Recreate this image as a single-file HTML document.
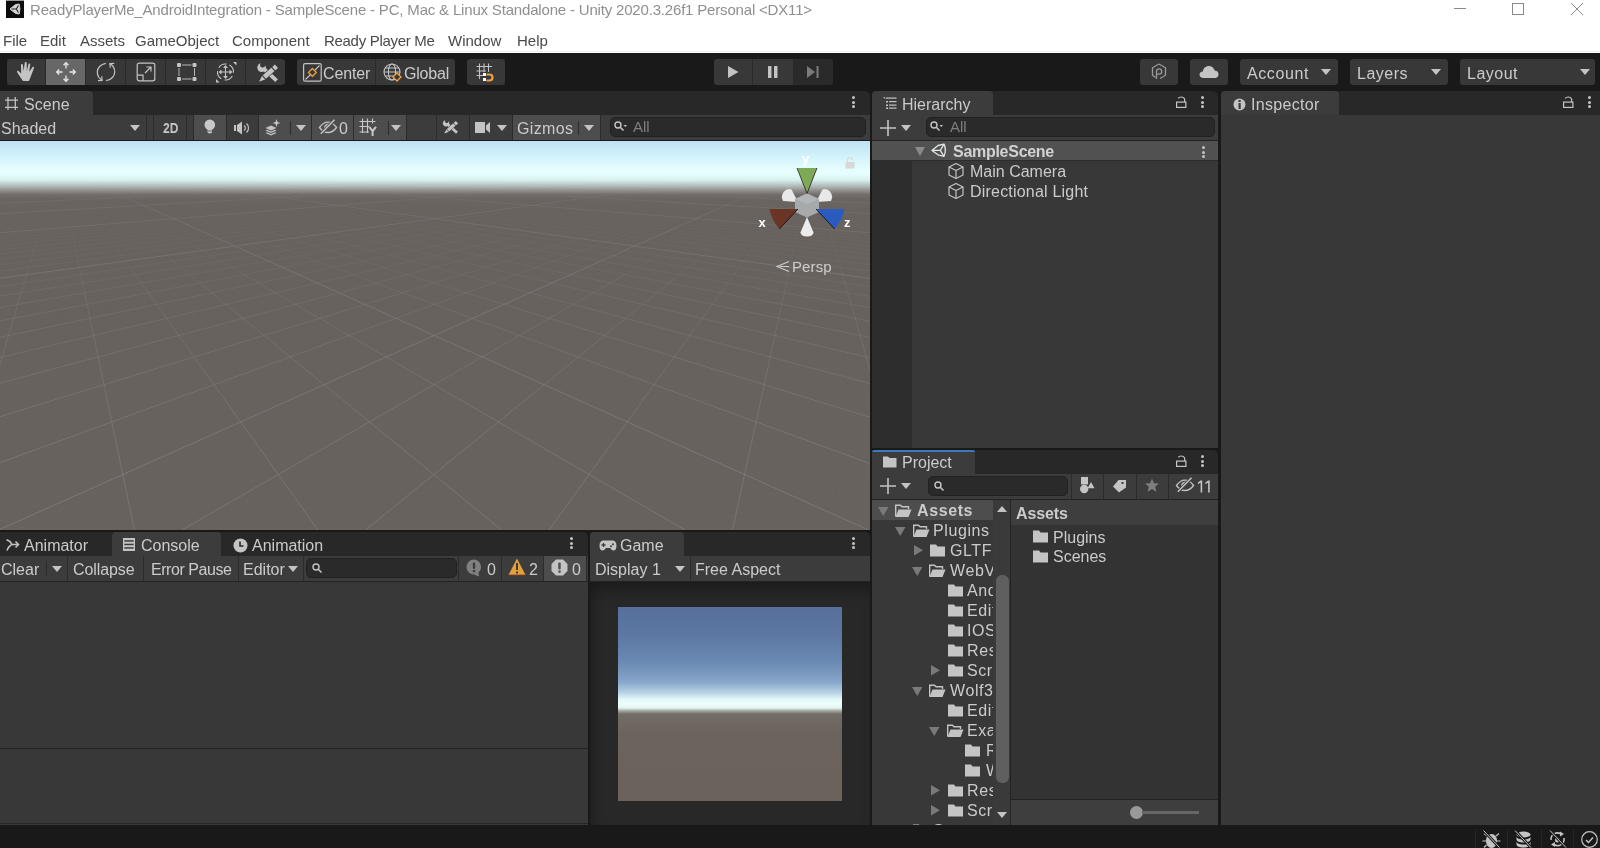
<!DOCTYPE html>
<html><head><meta charset="utf-8">
<style>
html,body{margin:0;padding:0;width:1600px;height:848px;overflow:hidden;background:#191919;}
body{position:relative;font-family:"Liberation Sans",sans-serif;color:#c4c4c4;}
.a{position:absolute;}
.t{position:absolute;white-space:nowrap;will-change:transform;font-size:16px;line-height:16px;color:#cbcbcb;margin-top:1.5px;}
.b{position:absolute;background:#383838;}
svg{position:absolute;overflow:visible;}
.tabbar{position:absolute;background:#282828;border-radius:5px 5px 0 0;}
.tab{position:absolute;background:#3c3c3c;border-radius:4px 4px 0 0;}
.tb{position:absolute;background:#3c3c3c;}
.srch{position:absolute;background:#2a2a2a;border:1px solid #212121;border-radius:5px;box-sizing:border-box;}
.sep{position:absolute;background:#2b2b2b;width:1px;}
.arr{position:absolute;width:0;height:0;border-left:5px solid transparent;border-right:5px solid transparent;border-top:6px solid #c4c4c4;}
.keb{position:absolute;width:3px;height:12px;}
.keb i{position:absolute;left:0;width:3px;height:3px;border-radius:2px;background:#c4c4c4;}
</style></head><body>
<!-- title + menu -->
<div class="a" style="left:0;top:0;width:1600px;height:53px;background:#ffffff"></div>
<div class="a" style="left:0;top:51px;width:1600px;height:1px;background:#eef0f0"></div>
<div class="a" style="left:6px;top:0;width:18px;height:18px;background:#0c0c0c;border-top:1px solid #9a9a9a;box-sizing:border-box"></div><svg style="left:6px;top:0" width="18" height="18" viewBox="0 0 18 18"><path d="M4 9 L9.5 4.6 L13.2 4 Q14.6 9 13.2 14 L9.5 13.4Z" fill="#d2d4d4" stroke="#d2d4d4" stroke-width="1" stroke-linejoin="round"/><path d="M5.5 9H10.3L12.5 5.5M10.3 9L12.5 12.5" stroke="#222" stroke-width="1.1" fill="none"/></svg>
<div class="t" style="margin-top:0;left:30px;top:2px;font-size:15px;line-height:15px;color:#8f8f8f;letter-spacing:-0.18px">ReadyPlayerMe_AndroidIntegration - SampleScene - PC, Mac &amp; Linux Standalone - Unity 2020.3.26f1 Personal &lt;DX11&gt;</div>
<svg style="left:1454px;top:8px" width="13" height="2"><rect x="0" y="0" width="12" height="1" fill="#8a8a8a"/></svg>
<svg style="left:1512px;top:3px" width="13" height="13"><rect x="0.5" y="0.5" width="11" height="11" fill="none" stroke="#8a8a8a" stroke-width="1"/></svg>
<svg style="left:1571px;top:3px" width="13" height="13"><path d="M0 0L12 12M12 0L0 12" stroke="#8a8a8a" stroke-width="1"/></svg>
<div class="t" style="margin-top:0;top:33px;font-size:15px;line-height:15px;color:#4a4a4a">
<span class="a" style="left:3px">File</span><span class="a" style="left:40px">Edit</span><span class="a" style="left:80px">Assets</span><span class="a" style="left:135px">GameObject</span><span class="a" style="left:232px">Component</span><span class="a" style="left:324px;letter-spacing:-0.3px">Ready Player Me</span><span class="a" style="left:448px">Window</span><span class="a" style="left:517px">Help</span>
</div>

<!-- main toolbar buttons -->
<div class="a" style="left:7px;top:59px;width:278px;height:26px;background:#383838;border-radius:3px"></div>
<div class="a" style="left:46px;top:59px;width:39px;height:26px;background:#676767"></div>
<div class="a" style="left:45px;top:59px;width:1px;height:26px;background:#2a2a2a"></div>
<div class="a" style="left:85px;top:59px;width:1px;height:26px;background:#2a2a2a"></div>
<div class="a" style="left:125px;top:59px;width:1px;height:26px;background:#2a2a2a"></div>
<div class="a" style="left:165px;top:59px;width:1px;height:26px;background:#2a2a2a"></div>
<div class="a" style="left:205px;top:59px;width:1px;height:26px;background:#2a2a2a"></div>
<div class="a" style="left:245px;top:59px;width:1px;height:26px;background:#2a2a2a"></div>
<!-- hand -->
<svg style="left:16px;top:61px" width="20" height="21" viewBox="0 0 20 21"><path d="M7 20 C5.5 18 3.5 15 1.2 11.2 C0.6 10.2 1.6 9.4 2.5 10 L5.2 12.5 L5 3.8 C5 2.6 6.8 2.6 6.9 3.8 L7.6 10 L8.8 1.8 C8.9 0.7 10.7 0.7 10.7 1.9 L10.8 10 L12.5 3 C12.7 2 14.4 2.3 14.2 3.4 L13.2 10.8 L16.4 6.2 C17 5.3 18.4 6 18 7 C16.5 10.5 15.5 14 14 17.5 C13.5 18.8 13.2 19.5 13 20 Z" fill="#c4c4c4"/></svg>
<!-- move -->
<svg style="left:56px;top:62px" width="20" height="20" viewBox="0 0 20 20"><g stroke="#e4eaec" stroke-width="1.35" fill="none"><path d="M10 0.8V6.5M10 13.5V19.2M0.8 10H6.5M13.5 10H19.2"/><path d="M7.6 3.2L10 0.8L12.4 3.2M7.6 16.8L10 19.2L12.4 16.8M3.2 7.6L0.8 10L3.2 12.4M16.8 7.6L19.2 10L16.8 12.4"/></g></svg>
<!-- rotate -->
<svg style="left:96px;top:62px" width="20" height="20" viewBox="0 0 20 20"><g stroke="#c4c4c4" stroke-width="1.2" fill="none"><path d="M9.8 1.4C4.5 2.2 1.3 6 1.3 10C1.3 13.6 3.2 16.6 6 18.2"/><path d="M5.7 14.2L6.1 18.4L2 18.7"/><path d="M10.2 18.6C15.5 17.8 18.7 14 18.7 10C18.7 6.4 16.8 3.4 14 1.8"/><path d="M18.2 1.3L13.9 1.6L14.3 5.8"/></g></svg>
<!-- scale -->
<svg style="left:136px;top:62px" width="20" height="20" viewBox="0 0 20 20"><g stroke="#c4c4c4" stroke-width="1.2" fill="none"><rect x="1.2" y="1.2" width="17.6" height="17.6" rx="2"/><path d="M1.2 13.2H7V18.8"/><path d="M9 11L15 5M10.5 5H15V9.5"/></g></svg>
<!-- rect -->
<svg style="left:176px;top:62px" width="21" height="20" viewBox="0 0 21 20"><g fill="#c4c4c4"><rect x="1" y="1" width="4" height="4" rx="1"/><rect x="16.5" y="1" width="4" height="4" rx="1"/><rect x="1" y="15" width="4" height="4" rx="1"/><rect x="16.5" y="15" width="4" height="4" rx="1"/></g><g stroke="#c4c4c4" stroke-width="0.9"><path d="M6 3H15.5M6 17H15.5M3 6V14M18.5 6V14"/></g></svg>
<!-- transform -->
<svg style="left:216px;top:62px" width="21" height="21" viewBox="0 0 21 21"><g stroke="#c4c4c4" stroke-width="1.1" fill="none"><circle cx="9.5" cy="10" r="8" stroke-dasharray="9 3.6" transform="rotate(-60 9.5 10)"/><path d="M9.5 4.5V15.5M4 10H15"/></g><g fill="#c4c4c4"><path d="M9.5 3L12 6H7Z"/><path d="M9.5 17L12 14H7Z"/><path d="M2.5 10L5.5 7.5V12.5Z"/><path d="M16.5 10L13.5 7.5V12.5Z"/><path d="M20.5 0L20.5 3.5L17 0Z"/><path d="M0 20.5L0 17L3.5 20.5Z"/></g></svg>
<!-- tools -->
<svg style="left:252px;top:59px" width="30" height="26" viewBox="0 0 30 26"><g fill="#c4c4c4"><circle cx="9.6" cy="8.6" r="4.3"/><path d="M11.22 11.90L13.78 9.10L25.88 20.20L23.32 23.00Z"/></g><circle cx="10.6" cy="5.9" r="2.5" fill="#383838"/><path d="M22.98 5.48L26.02 8.92L13.07 20.39L7.00 22.70L10.02 16.95Z" fill="#c4c4c4" stroke="#383838" stroke-width="1.3" paint-order="stroke"/><path d="M19.42 7.96L23.14 12.15M10.07 16.24L13.78 20.44" stroke="#383838" stroke-width="1.1"/></svg>
<!-- center / global -->
<div class="a" style="left:297px;top:59px;width:158px;height:26px;background:#383838;border-radius:3px"></div>
<div class="a" style="left:375px;top:59px;width:1px;height:26px;background:#2a2a2a"></div>
<svg style="left:303px;top:63px" width="19" height="19" viewBox="0 0 19 19"><rect x="0.6" y="0.6" width="17.6" height="17.6" rx="1.5" fill="none" stroke="#c4c4c4" stroke-width="1.2"/><path d="M2.5 16.5L16.5 2.5" stroke="#c4c4c4" stroke-width="1.1"/><path d="M9.4 5.5L13.3 9.4L9.4 13.3L5.5 9.4Z" fill="#383838" stroke="#f0a040" stroke-width="1.3"/></svg>
<div class="t" style="left:323px;top:64px;letter-spacing:-0.15px">Center</div>
<svg style="left:383px;top:63px" width="20" height="20" viewBox="0 0 20 20"><g stroke="#c4c4c4" stroke-width="1.1" fill="none"><circle cx="9" cy="9" r="8"/><ellipse cx="9" cy="9" rx="3.6" ry="8"/><path d="M1 9H17M2.2 5H15.8M2.2 13H15.8"/></g><path d="M14 10L18 14L14 18L10 14Z" fill="#383838" stroke="#f0a040" stroke-width="1.3"/></svg>
<div class="t" style="left:404px;top:64px;letter-spacing:-0.2px">Global</div>
<!-- snap -->
<div class="a" style="left:467px;top:59px;width:38px;height:26px;background:#383838;border-radius:3px"></div>
<svg style="left:476px;top:63px" width="20" height="20" viewBox="0 0 20 20"><g stroke="#c4c4c4" stroke-width="1.1"><path d="M3.5 0.5V16M8 0.5V9M12.5 0.5V9M0.5 3.5H16M0.5 8H10M0.5 12.5H7"/></g><rect x="7" y="10" width="3" height="3" fill="#fff"/><rect x="7" y="15" width="3" height="3" fill="#fff"/><path d="M10.5 11.5H13.5A3 3 0 0 1 13.5 17.5H10.5" fill="none" stroke="#f0a040" stroke-width="2.2"/></svg>

<!-- play -->
<div class="a" style="left:714px;top:59px;width:118px;height:26px;background:#383838;border-radius:3px"></div>
<div class="a" style="left:793px;top:59px;width:40px;height:26px;background:#2a2a2a;border-radius:0 3px 3px 0"></div>
<div class="a" style="left:752px;top:59px;width:1px;height:26px;background:#2a2a2a"></div>
<svg style="left:728px;top:66px" width="12" height="13"><path d="M0 0L10.5 6L0 12Z" fill="#c4c4c4"/></svg>
<svg style="left:768px;top:66px" width="12" height="13"><rect x="0" y="0" width="3.5" height="12" rx="0.6" fill="#c4c4c4"/><rect x="6" y="0" width="3.5" height="12" rx="0.6" fill="#c4c4c4"/></svg>
<svg style="left:807px;top:66px" width="14" height="13"><path d="M0 0L8 6L0 12Z" fill="#7a7a7a"/><rect x="9.5" y="0" width="2" height="12" fill="#7a7a7a"/></svg>

<!-- right toolbar -->
<div class="a" style="left:1140px;top:59px;width:38px;height:26px;background:#383838;border-radius:3px"></div>
<svg style="left:1150px;top:63px" width="18" height="18" viewBox="0 0 18 18"><g stroke="#9a9a9a" stroke-width="1.3" fill="none"><path d="M9 1L15.5 4.8V12.2L10 15.5M5.5 14.5L2.5 12.2V4.8L9 1"/><path d="M6.5 16V8.5A2.6 2.6 0 1 1 9.2 11.1H7"/></g></svg>
<div class="a" style="left:1190px;top:59px;width:38px;height:26px;background:#383838;border-radius:3px"></div>
<svg style="left:1199px;top:65px" width="20" height="14" viewBox="0 0 20 14"><path d="M4 13C1.5 13 0.5 11.2 0.5 9.6C0.5 7.8 2 6.4 3.8 6.5C4.3 3.3 6.8 1 9.8 1C12.8 1 15 3 15.6 5.6C17.8 5.6 19.5 7.3 19.5 9.4C19.5 11.4 18 13 16 13Z" fill="#c4c4c4"/></svg>
<div class="a" style="left:1240px;top:59px;width:98px;height:26px;background:#383838;border-radius:3px"></div>
<div class="t" style="left:1247px;top:64px;letter-spacing:0.6px">Account</div>
<div class="arr" style="left:1321px;top:69px"></div>
<div class="a" style="left:1350px;top:59px;width:98px;height:26px;background:#383838;border-radius:3px"></div>
<div class="t" style="left:1357px;top:64px;letter-spacing:0.5px">Layers</div>
<div class="arr" style="left:1431px;top:69px"></div>
<div class="a" style="left:1460px;top:59px;width:135px;height:26px;background:#383838;border-radius:3px"></div>
<div class="t" style="left:1467px;top:64px;letter-spacing:0.5px">Layout</div>
<div class="arr" style="left:1580px;top:69px"></div>
<!-- SCENE PANEL -->
<div class="tabbar" style="left:0;top:91px;width:870px;height:24px;border-radius:0 5px 0 0"></div>
<div class="tab" style="left:0;top:91px;width:93px;height:24px;border-radius:0 4px 0 0"></div>
<svg style="left:5px;top:97px" width="13" height="13" viewBox="0 0 13 13"><g stroke="#c4c4c4" stroke-width="1.25"><path d="M3 0V13M10.3 0V13M0 3H13M0 10.3H13"/></g></svg>
<div class="t" style="left:24px;top:95px;letter-spacing:0.1px">Scene</div>
<div class="keb" style="left:852px;top:96px"><i style="top:0"></i><i style="top:4.5px"></i><i style="top:9px"></i></div>

<div class="tb" style="left:0;top:115px;width:870px;height:25px"></div>
<div class="a" style="left:0;top:140px;width:870px;height:1px;background:#191919"></div>
<div class="t" style="left:1px;top:119px">Shaded</div>
<div class="arr" style="left:130px;top:125px"></div>
<div class="a" style="left:146px;top:115px;width:1px;height:25px;background:#2b2b2b"></div>
<div class="a" style="left:153px;top:115px;width:1px;height:25px;background:#2b2b2b"></div>
<div class="t" style="left:162.5px;top:119px;font-size:14px;line-height:14px;font-weight:bold;transform:scaleX(0.86);transform-origin:0 0;color:#c8c8c8">2D</div>
<div class="a" style="left:186px;top:115px;width:1px;height:25px;background:#2b2b2b"></div>
<div class="a" style="left:193px;top:115px;width:1px;height:25px;background:#2b2b2b"></div>
<div class="a" style="left:194px;top:115px;width:32px;height:25px;background:#4d4d4d"></div>
<div class="a" style="left:226px;top:115px;width:1px;height:25px;background:#2b2b2b"></div>
<div class="a" style="left:258px;top:115px;width:1px;height:25px;background:#2b2b2b"></div>
<div class="a" style="left:259px;top:115px;width:52px;height:25px;background:#4d4d4d"></div>
<div class="a" style="left:311px;top:115px;width:1px;height:25px;background:#2b2b2b"></div>
<div class="a" style="left:312px;top:115px;width:41px;height:25px;background:#4d4d4d"></div>
<div class="a" style="left:353px;top:115px;width:1px;height:25px;background:#2b2b2b"></div>
<div class="a" style="left:354px;top:115px;width:52px;height:25px;background:#4d4d4d"></div>
<div class="a" style="left:406px;top:115px;width:1px;height:25px;background:#2b2b2b"></div>
<div class="a" style="left:436px;top:115px;width:1px;height:25px;background:#2b2b2b"></div>
<div class="a" style="left:469px;top:115px;width:1px;height:25px;background:#2b2b2b"></div>
<div class="a" style="left:512px;top:115px;width:1px;height:25px;background:#2b2b2b"></div>
<div class="a" style="left:513px;top:115px;width:87px;height:25px;background:#4d4d4d"></div>
<div class="a" style="left:600px;top:115px;width:1px;height:25px;background:#2b2b2b"></div>
<!-- bulb -->
<svg style="left:204px;top:119px" width="12" height="16" viewBox="0 0 12 16"><circle cx="5.8" cy="5.8" r="5.3" fill="#c8c8c8"/><path d="M3.5 10 H8.1 V13.5 Q5.8 15.5 3.5 13.5Z" fill="#c8c8c8"/><path d="M3.5 12H8.1" stroke="#4d4d4d" stroke-width="0.8"/></svg>
<!-- audio -->
<svg style="left:234px;top:121px" width="18" height="14" viewBox="0 0 18 14"><g fill="#c4c4c4"><rect x="0" y="4" width="2" height="6"/><path d="M3 4L8 0.5V13.5L3 10Z"/></g><g stroke="#c4c4c4" stroke-width="1.2" fill="none"><path d="M10 4.5A3 3 0 0 1 10 9.5"/><path d="M12.5 2.5A6 6 0 0 1 12.5 11.5"/></g></svg>
<!-- effects -->
<svg style="left:265px;top:119px" width="16" height="17" viewBox="0 0 16 17"><g fill="#c4c4c4"><path d="M0.5 9L6 6.5L11.5 9L6 11.5Z"/><path d="M0.5 11.5L2 10.8L6 12.6L10 10.8L11.5 11.5L6 14Z"/><path d="M0.5 14L2 13.3L6 15.1L10 13.3L11.5 14L6 16.5Z"/><path d="M11.5 0L12.5 3L15.5 4L12.5 5L11.5 8L10.5 5L7.5 4L10.5 3Z"/></g></svg>
<div class="a" style="left:290px;top:121px;width:1px;height:14px;background:#2b2b2b"></div>
<div class="arr" style="left:296px;top:125px"></div>
<!-- hidden -->
<svg style="left:318px;top:118px" width="20" height="17" viewBox="0 0 20 17"><path d="M1.5 9.5C4 6 7 4.2 10 4.2C13 4.2 16 6 18.5 9.5C16 13 13 14.5 10 14.5C7 14.5 4 13 1.5 9.5Z" fill="none" stroke="#c4c4c4" stroke-width="1.3"/><path d="M6.2 10A3.9 3.9 0 0 1 13.2 7.2L7.5 12.8A3.9 3.9 0 0 1 6.2 10Z" fill="#c4c4c4"/><path d="M2.8 15.8L16.5 1.8" stroke="#4d4d4d" stroke-width="3.2"/><path d="M2.8 15.8L16.5 1.8" stroke="#c4c4c4" stroke-width="1.5"/></svg>
<div class="t" style="left:339px;top:119px">0</div>
<!-- grid -->
<svg style="left:359px;top:118px" width="18" height="19" viewBox="0 0 18 19"><g stroke="#c8c8c8" stroke-width="1.1"><path d="M3.5 0.5V15M8.5 0.5V15M13.5 0.5V5.5M0.5 3.5H16.5M0.5 8.5H10M0.5 14H10"/></g><path d="M10.2 8.8L13.6 13.2L17 8.8M13.6 13.2V18" stroke="#c8c8c8" stroke-width="2" fill="none"/></svg>
<div class="a" style="left:388px;top:121px;width:1px;height:14px;background:#2b2b2b"></div>
<div class="arr" style="left:391px;top:125px"></div>
<!-- tools -->
<svg style="left:439px;top:117px" width="22" height="19" viewBox="0 0 30 26"><g fill="#c4c4c4"><circle cx="9.6" cy="8.6" r="4.3"/><path d="M11.22 11.90L13.78 9.10L25.88 20.20L23.32 23.00Z"/></g><circle cx="10.6" cy="5.9" r="2.5" fill="#3c3c3c"/><path d="M22.98 5.48L26.02 8.92L13.07 20.39L7.00 22.70L10.02 16.95Z" fill="#c4c4c4" stroke="#3c3c3c" stroke-width="1.3" paint-order="stroke"/><path d="M19.42 7.96L23.14 12.15M10.07 16.24L13.78 20.44" stroke="#3c3c3c" stroke-width="1.1"/></svg>
<!-- camera -->
<svg style="left:475px;top:121px" width="16" height="13" viewBox="0 0 16 13"><rect x="0" y="1" width="10" height="11" fill="#c4c4c4"/><path d="M11 4.5L15 1V12L11 8.5Z" fill="#c4c4c4"/></svg>
<div class="arr" style="left:497px;top:125px"></div>
<div class="t" style="left:517px;top:119px;letter-spacing:0.35px">Gizmos</div>
<div class="a" style="left:578px;top:121px;width:1px;height:14px;background:#2b2b2b"></div>
<div class="arr" style="left:584px;top:125px"></div>
<div class="srch" style="left:610px;top:117px;width:256px;height:20px"></div>
<svg style="left:614px;top:121px" width="14" height="12" viewBox="0 0 14 12"><circle cx="4" cy="4" r="3" fill="none" stroke="#c4c4c4" stroke-width="1.4"/><path d="M6 6L9.5 9.5" stroke="#c4c4c4" stroke-width="1.6"/><path d="M9.5 4H13L11.25 6Z" fill="#c4c4c4"/></svg>
<div class="t" style="left:633px;top:117px;font-size:15px;line-height:15px;color:#7f7f7f">All</div>

<!-- scene view -->
<div class="a" style="left:0;top:141px;width:870px;height:389px;overflow:hidden;background:linear-gradient(to bottom,#bfe2f4 0px,#cbecf8 10px,#d9f6fc 20px,#e4fdfe 28px,#e6fefd 33px,#d8f0f0 39px,#b4bcbc 45px,#8f8c8a 50px,#736d6a 53.5px,#6a6460 58px,#68625e 70px,#68625e 389px)">
<svg width="870" height="389" style="position:absolute;left:0;top:0">
<defs><linearGradient id="g10" gradientUnits="userSpaceOnUse" x1="0" y1="0" x2="0" y2="389"><stop offset="0" stop-color="#fff" stop-opacity="0"/><stop offset="0.105" stop-color="#fff" stop-opacity="0"/><stop offset="0.16" stop-color="#fff" stop-opacity="0.45"/><stop offset="0.35" stop-color="#fff" stop-opacity="0.8"/><stop offset="0.8" stop-color="#fff" stop-opacity="1"/><stop offset="1" stop-color="#fff" stop-opacity="1"/></linearGradient><mask id="mg10" maskUnits="userSpaceOnUse" x="0" y="0" width="870" height="389"><rect width="870" height="389" fill="url(#g10)"/></mask><linearGradient id="g1" gradientUnits="userSpaceOnUse" x1="0" y1="0" x2="0" y2="389"><stop offset="0" stop-color="#fff" stop-opacity="0"/><stop offset="0.12" stop-color="#fff" stop-opacity="0"/><stop offset="0.25" stop-color="#fff" stop-opacity="0.2"/><stop offset="0.45" stop-color="#fff" stop-opacity="0.6"/><stop offset="0.8" stop-color="#fff" stop-opacity="1"/><stop offset="1" stop-color="#fff" stop-opacity="1"/></linearGradient><mask id="mg1" maskUnits="userSpaceOnUse" x="0" y="0" width="870" height="389"><rect width="870" height="389" fill="url(#g1)"/></mask><linearGradient id="g01" gradientUnits="userSpaceOnUse" x1="0" y1="0" x2="0" y2="389"><stop offset="0" stop-color="#fff" stop-opacity="0"/><stop offset="0.4" stop-color="#fff" stop-opacity="0"/><stop offset="0.7" stop-color="#fff" stop-opacity="0.5"/><stop offset="1" stop-color="#fff" stop-opacity="1"/></linearGradient><mask id="mg01" maskUnits="userSpaceOnUse" x="0" y="0" width="870" height="389"><rect width="870" height="389" fill="url(#g01)"/></mask></defs>
<g mask="url(#mg01)"><path d="M-5488.2 389.0L811.7 26.0M-5469.8 389.0L811.7 26.0M-5451.5 389.0L811.7 26.0M-5433.1 389.0L811.7 26.0M-5414.8 389.0L811.7 26.0M-5396.4 389.0L811.7 26.0M-5378.1 389.0L811.7 26.0M-5359.7 389.0L811.7 26.0M-5341.4 389.0L811.7 26.0M-5304.7 389.0L811.7 26.0M-5286.3 389.0L811.7 26.0M-5268.0 389.0L811.7 26.0M-5249.6 389.0L811.7 26.0M-5231.2 389.0L811.7 26.0M-5212.9 389.0L811.7 26.0M-5194.6 389.0L811.7 26.0M-5176.2 389.0L811.7 26.0M-5157.9 389.0L811.7 26.0M-5121.2 389.0L811.7 26.0M-5102.8 389.0L811.7 26.0M-5084.5 389.0L811.7 26.0M-5066.1 389.0L811.7 26.0M-5047.8 389.0L811.7 26.0M-5029.4 389.0L811.7 26.0M-5011.1 389.0L811.7 26.0M-4992.7 389.0L811.7 26.0M-4974.4 389.0L811.7 26.0M-4937.7 389.0L811.7 26.0M-4919.3 389.0L811.7 26.0M-4901.0 389.0L811.7 26.0M-4882.6 389.0L811.7 26.0M-4864.2 389.0L811.7 26.0M-4845.9 389.0L811.7 26.0M-4827.6 389.0L811.7 26.0M-4809.2 389.0L811.7 26.0M-4790.9 389.0L811.7 26.0M-4754.2 389.0L811.7 26.0M-4735.8 389.0L811.7 26.0M-4717.5 389.0L811.7 26.0M-4699.1 389.0L811.7 26.0M-4680.8 389.0L811.7 26.0M-4662.4 389.0L811.7 26.0M-4644.1 389.0L811.7 26.0M-4625.7 389.0L811.7 26.0M-4607.4 389.0L811.7 26.0M-4570.7 389.0L811.7 26.0M-4552.3 389.0L811.7 26.0M-4534.0 389.0L811.7 26.0M-4515.6 389.0L811.7 26.0M-4497.2 389.0L811.7 26.0M-4478.9 389.0L811.7 26.0M-4460.6 389.0L811.7 26.0M-4442.2 389.0L811.7 26.0M-4423.9 389.0L811.7 26.0M-4387.2 389.0L811.7 26.0M-4368.8 389.0L811.7 26.0M-4350.5 389.0L811.7 26.0M-4332.1 389.0L811.7 26.0M-4313.8 389.0L811.7 26.0M-4295.4 389.0L811.7 26.0M-4277.1 389.0L811.7 26.0M-4258.7 389.0L811.7 26.0M-4240.4 389.0L811.7 26.0M-4203.7 389.0L811.7 26.0M-4185.3 389.0L811.7 26.0M-4167.0 389.0L811.7 26.0M-4148.6 389.0L811.7 26.0M-4130.2 389.0L811.7 26.0M-4111.9 389.0L811.7 26.0M-4093.6 389.0L811.7 26.0M-4075.2 389.0L811.7 26.0M-4056.9 389.0L811.7 26.0M-4020.2 389.0L811.7 26.0M-4001.8 389.0L811.7 26.0M-3983.5 389.0L811.7 26.0M-3965.1 389.0L811.7 26.0M-3946.8 389.0L811.7 26.0M-3928.4 389.0L811.7 26.0M-3910.1 389.0L811.7 26.0M-3891.7 389.0L811.7 26.0M-3873.4 389.0L811.7 26.0M-3836.7 389.0L811.7 26.0M-3818.3 389.0L811.7 26.0M-3800.0 389.0L811.7 26.0M-3781.6 389.0L811.7 26.0M-3763.3 389.0L811.7 26.0M-3744.9 389.0L811.7 26.0M-3726.6 389.0L811.7 26.0M-3708.2 389.0L811.7 26.0M-3689.9 389.0L811.7 26.0M-3653.2 389.0L811.7 26.0M-3634.8 389.0L811.7 26.0M-3616.5 389.0L811.7 26.0M-3598.1 389.0L811.7 26.0M-3579.8 389.0L811.7 26.0M-3561.4 389.0L811.7 26.0M-3543.1 389.0L811.7 26.0M-3524.7 389.0L811.7 26.0M-3506.4 389.0L811.7 26.0M-3469.7 389.0L811.7 26.0M-3451.3 389.0L811.7 26.0M-3433.0 389.0L811.7 26.0M-3414.6 389.0L811.7 26.0M-3396.3 389.0L811.7 26.0M-3377.9 389.0L811.7 26.0M-3359.6 389.0L811.7 26.0M-3341.2 389.0L811.7 26.0M-3322.9 389.0L811.7 26.0M-3286.2 389.0L811.7 26.0M-3267.8 389.0L811.7 26.0M-3249.5 389.0L811.7 26.0M-3231.1 389.0L811.7 26.0M-3212.8 389.0L811.7 26.0M-3194.4 389.0L811.7 26.0M-3176.1 389.0L811.7 26.0M-3157.7 389.0L811.7 26.0M-3139.4 389.0L811.7 26.0M-3102.7 389.0L811.7 26.0M-3084.3 389.0L811.7 26.0M-3066.0 389.0L811.7 26.0M-3047.6 389.0L811.7 26.0M-3029.3 389.0L811.7 26.0M-3010.9 389.0L811.7 26.0M-2992.6 389.0L811.7 26.0M-2974.2 389.0L811.7 26.0M-2955.9 389.0L811.7 26.0M-2919.2 389.0L811.7 26.0M-2900.8 389.0L811.7 26.0M-2882.5 389.0L811.7 26.0M-2864.1 389.0L811.7 26.0M-2845.8 389.0L811.7 26.0M-2827.4 389.0L811.7 26.0M-2809.1 389.0L811.7 26.0M-2790.7 389.0L811.7 26.0M-2772.4 389.0L811.7 26.0M-2735.7 389.0L811.7 26.0M-2717.3 389.0L811.7 26.0M-2699.0 389.0L811.7 26.0M-2680.6 389.0L811.7 26.0M-2662.2 389.0L811.7 26.0M-2643.9 389.0L811.7 26.0M-2625.6 389.0L811.7 26.0M-2607.2 389.0L811.7 26.0M-2588.9 389.0L811.7 26.0M-2552.2 389.0L811.7 26.0M-2533.8 389.0L811.7 26.0M-2515.5 389.0L811.7 26.0M-2497.1 389.0L811.7 26.0M-2478.8 389.0L811.7 26.0M-2460.4 389.0L811.7 26.0M-2442.1 389.0L811.7 26.0M-2423.7 389.0L811.7 26.0M-2405.4 389.0L811.7 26.0M-2368.7 389.0L811.7 26.0M-2350.3 389.0L811.7 26.0M-2332.0 389.0L811.7 26.0M-2313.6 389.0L811.7 26.0M-2295.2 389.0L811.7 26.0M-2276.9 389.0L811.7 26.0M-2258.6 389.0L811.7 26.0M-2240.2 389.0L811.7 26.0M-2221.9 389.0L811.7 26.0M-2185.2 389.0L811.7 26.0M-2166.8 389.0L811.7 26.0M-2148.5 389.0L811.7 26.0M-2130.1 389.0L811.7 26.0M-2111.8 389.0L811.7 26.0M-2093.4 389.0L811.7 26.0M-2075.1 389.0L811.7 26.0M-2056.7 389.0L811.7 26.0M-2038.4 389.0L811.7 26.0M-2001.7 389.0L811.7 26.0M-1983.3 389.0L811.7 26.0M-1965.0 389.0L811.7 26.0M-1946.6 389.0L811.7 26.0M-1928.3 389.0L811.7 26.0M-1909.9 389.0L811.7 26.0M-1891.6 389.0L811.7 26.0M-1873.2 389.0L811.7 26.0M-1854.9 389.0L811.7 26.0M-1818.2 389.0L811.7 26.0M-1799.8 389.0L811.7 26.0M-1781.5 389.0L811.7 26.0M-1763.1 389.0L811.7 26.0M-1744.8 389.0L811.7 26.0M-1726.4 389.0L811.7 26.0M-1708.1 389.0L811.7 26.0M-1689.7 389.0L811.7 26.0M-1671.4 389.0L811.7 26.0M-1634.7 389.0L811.7 26.0M-1616.3 389.0L811.7 26.0M-1598.0 389.0L811.7 26.0M-1579.6 389.0L811.7 26.0M-1561.3 389.0L811.7 26.0M-1542.9 389.0L811.7 26.0M-1524.6 389.0L811.7 26.0M-1506.2 389.0L811.7 26.0M-1487.9 389.0L811.7 26.0M-1451.2 389.0L811.7 26.0M-1432.8 389.0L811.7 26.0M-1414.5 389.0L811.7 26.0M-1396.1 389.0L811.7 26.0M-1377.8 389.0L811.7 26.0M-1359.4 389.0L811.7 26.0M-1341.1 389.0L811.7 26.0M-1322.7 389.0L811.7 26.0M-1304.4 389.0L811.7 26.0M-1267.7 389.0L811.7 26.0M-1249.3 389.0L811.7 26.0M-1231.0 389.0L811.7 26.0M-1212.6 389.0L811.7 26.0M-1194.2 389.0L811.7 26.0M-1175.9 389.0L811.7 26.0M-1157.6 389.0L811.7 26.0M-1139.2 389.0L811.7 26.0M-1120.9 389.0L811.7 26.0M-1084.2 389.0L811.7 26.0M-1065.8 389.0L811.7 26.0M-1047.5 389.0L811.7 26.0M-1029.1 389.0L811.7 26.0M-1010.8 389.0L811.7 26.0M-992.4 389.0L811.7 26.0M-974.1 389.0L811.7 26.0M-955.7 389.0L811.7 26.0M-937.4 389.0L811.7 26.0M-900.7 389.0L811.7 26.0M-882.3 389.0L811.7 26.0M-864.0 389.0L811.7 26.0M-845.6 389.0L811.7 26.0M-827.3 389.0L811.7 26.0M-808.9 389.0L811.7 26.0M-790.6 389.0L811.7 26.0M-772.2 389.0L811.7 26.0M-753.9 389.0L811.7 26.0M-717.2 389.0L811.7 26.0M-698.8 389.0L811.7 26.0M-680.5 389.0L811.7 26.0M-662.1 389.0L811.7 26.0M-643.8 389.0L811.7 26.0M-625.4 389.0L811.7 26.0M-607.1 389.0L811.7 26.0M-588.7 389.0L811.7 26.0M-570.4 389.0L811.7 26.0M-533.7 389.0L811.7 26.0M-515.3 389.0L811.7 26.0M-497.0 389.0L811.7 26.0M-478.6 389.0L811.7 26.0M-460.3 389.0L811.7 26.0M-441.9 389.0L811.7 26.0M-423.6 389.0L811.7 26.0M-405.2 389.0L811.7 26.0M-386.9 389.0L811.7 26.0M-350.2 389.0L811.7 26.0M-331.8 389.0L811.7 26.0M-313.5 389.0L811.7 26.0M-295.1 389.0L811.7 26.0M-276.8 389.0L811.7 26.0M-258.4 389.0L811.7 26.0M-240.1 389.0L811.7 26.0M-221.7 389.0L811.7 26.0M-203.4 389.0L811.7 26.0M-166.7 389.0L811.7 26.0M-148.3 389.0L811.7 26.0M-130.0 389.0L811.7 26.0M-111.6 389.0L811.7 26.0M-93.2 389.0L811.7 26.0M-74.9 389.0L811.7 26.0M-56.6 389.0L811.7 26.0M-38.2 389.0L811.7 26.0M-19.9 389.0L811.7 26.0M16.9 389.0L811.7 26.0M35.2 389.0L811.7 26.0M53.6 389.0L811.7 26.0M71.9 389.0L811.7 26.0M90.2 389.0L811.7 26.0M108.6 389.0L811.7 26.0M127.0 389.0L811.7 26.0M145.3 389.0L811.7 26.0M163.7 389.0L811.7 26.0M200.4 389.0L811.7 26.0M218.7 389.0L811.7 26.0M237.1 389.0L811.7 26.0M255.4 389.0L811.7 26.0M273.8 389.0L811.7 26.0M292.1 389.0L811.7 26.0M310.5 389.0L811.7 26.0M328.8 389.0L811.7 26.0M347.2 389.0L811.7 26.0M383.9 389.0L811.7 26.0M402.2 389.0L811.7 26.0M420.6 389.0L811.7 26.0M438.9 389.0L811.7 26.0M457.3 389.0L811.7 26.0M475.6 389.0L811.7 26.0M494.0 389.0L811.7 26.0M512.3 389.0L811.7 26.0M530.7 389.0L811.7 26.0M567.4 389.0L811.7 26.0M585.7 389.0L811.7 26.0M604.1 389.0L811.7 26.0M622.4 389.0L811.7 26.0M640.8 389.0L811.7 26.0M659.1 389.0L811.7 26.0M677.5 389.0L811.7 26.0M695.8 389.0L811.7 26.0M714.2 389.0L811.7 26.0M750.9 389.0L811.7 26.0M769.2 389.0L811.7 26.0M787.6 389.0L811.7 26.0M805.9 389.0L811.7 26.0M824.3 389.0L811.7 26.0M842.6 389.0L811.7 26.0M861.0 389.0L811.7 26.0M879.3 389.0L811.7 26.0M897.7 389.0L811.7 26.0M934.4 389.0L811.7 26.0M952.7 389.0L811.7 26.0M971.1 389.0L811.7 26.0M989.4 389.0L811.7 26.0M1007.8 389.0L811.7 26.0M1026.1 389.0L811.7 26.0M1044.5 389.0L811.7 26.0M1062.8 389.0L811.7 26.0M1081.2 389.0L811.7 26.0M1117.9 389.0L811.7 26.0M1136.2 389.0L811.7 26.0M1154.6 389.0L811.7 26.0M1172.9 389.0L811.7 26.0M1191.2 389.0L811.7 26.0M1209.6 389.0L811.7 26.0M1228.0 389.0L811.7 26.0M1246.3 389.0L811.7 26.0M1264.7 389.0L811.7 26.0M1301.4 389.0L811.7 26.0M1319.7 389.0L811.7 26.0M1338.1 389.0L811.7 26.0M1356.4 389.0L811.7 26.0M1374.8 389.0L811.7 26.0M1393.1 389.0L811.7 26.0M1411.5 389.0L811.7 26.0M1429.8 389.0L811.7 26.0M1448.2 389.0L811.7 26.0M1484.9 389.0L811.7 26.0M1503.2 389.0L811.7 26.0M1521.6 389.0L811.7 26.0M1539.9 389.0L811.7 26.0M1558.3 389.0L811.7 26.0M1576.6 389.0L811.7 26.0M1595.0 389.0L811.7 26.0M1613.3 389.0L811.7 26.0M1631.7 389.0L811.7 26.0M1668.4 389.0L811.7 26.0M1686.7 389.0L811.7 26.0M1705.1 389.0L811.7 26.0M1723.4 389.0L811.7 26.0M1741.8 389.0L811.7 26.0M1760.1 389.0L811.7 26.0M1778.5 389.0L811.7 26.0M1796.8 389.0L811.7 26.0M1815.2 389.0L811.7 26.0M1851.9 389.0L811.7 26.0M1870.2 389.0L811.7 26.0M1888.6 389.0L811.7 26.0M1906.9 389.0L811.7 26.0M1925.3 389.0L811.7 26.0M1943.6 389.0L811.7 26.0M1962.0 389.0L811.7 26.0M1980.3 389.0L811.7 26.0M1998.7 389.0L811.7 26.0M2035.4 389.0L811.7 26.0M2053.7 389.0L811.7 26.0M2072.1 389.0L811.7 26.0M2090.4 389.0L811.7 26.0M2108.8 389.0L811.7 26.0M2127.1 389.0L811.7 26.0M2145.5 389.0L811.7 26.0M2163.8 389.0L811.7 26.0M2182.2 389.0L811.7 26.0M-2049.2 389.0L58.3 26.0M-2030.8 389.0L58.3 26.0M-2012.5 389.0L58.3 26.0M-1994.1 389.0L58.3 26.0M-1975.8 389.0L58.3 26.0M-1957.4 389.0L58.3 26.0M-1939.1 389.0L58.3 26.0M-1920.7 389.0L58.3 26.0M-1902.4 389.0L58.3 26.0M-1865.7 389.0L58.3 26.0M-1847.3 389.0L58.3 26.0M-1829.0 389.0L58.3 26.0M-1810.6 389.0L58.3 26.0M-1792.3 389.0L58.3 26.0M-1773.9 389.0L58.3 26.0M-1755.6 389.0L58.3 26.0M-1737.2 389.0L58.3 26.0M-1718.9 389.0L58.3 26.0M-1682.2 389.0L58.3 26.0M-1663.8 389.0L58.3 26.0M-1645.5 389.0L58.3 26.0M-1627.1 389.0L58.3 26.0M-1608.8 389.0L58.3 26.0M-1590.4 389.0L58.3 26.0M-1572.1 389.0L58.3 26.0M-1553.7 389.0L58.3 26.0M-1535.4 389.0L58.3 26.0M-1498.7 389.0L58.3 26.0M-1480.3 389.0L58.3 26.0M-1462.0 389.0L58.3 26.0M-1443.6 389.0L58.3 26.0M-1425.3 389.0L58.3 26.0M-1406.9 389.0L58.3 26.0M-1388.6 389.0L58.3 26.0M-1370.2 389.0L58.3 26.0M-1351.9 389.0L58.3 26.0M-1315.2 389.0L58.3 26.0M-1296.8 389.0L58.3 26.0M-1278.5 389.0L58.3 26.0M-1260.1 389.0L58.3 26.0M-1241.8 389.0L58.3 26.0M-1223.4 389.0L58.3 26.0M-1205.1 389.0L58.3 26.0M-1186.7 389.0L58.3 26.0M-1168.4 389.0L58.3 26.0M-1131.7 389.0L58.3 26.0M-1113.3 389.0L58.3 26.0M-1095.0 389.0L58.3 26.0M-1076.6 389.0L58.3 26.0M-1058.2 389.0L58.3 26.0M-1039.9 389.0L58.3 26.0M-1021.6 389.0L58.3 26.0M-1003.2 389.0L58.3 26.0M-984.9 389.0L58.3 26.0M-948.2 389.0L58.3 26.0M-929.8 389.0L58.3 26.0M-911.5 389.0L58.3 26.0M-893.1 389.0L58.3 26.0M-874.8 389.0L58.3 26.0M-856.4 389.0L58.3 26.0M-838.1 389.0L58.3 26.0M-819.7 389.0L58.3 26.0M-801.4 389.0L58.3 26.0M-764.7 389.0L58.3 26.0M-746.3 389.0L58.3 26.0M-728.0 389.0L58.3 26.0M-709.6 389.0L58.3 26.0M-691.3 389.0L58.3 26.0M-672.9 389.0L58.3 26.0M-654.6 389.0L58.3 26.0M-636.2 389.0L58.3 26.0M-617.9 389.0L58.3 26.0M-581.2 389.0L58.3 26.0M-562.8 389.0L58.3 26.0M-544.5 389.0L58.3 26.0M-526.1 389.0L58.3 26.0M-507.8 389.0L58.3 26.0M-489.4 389.0L58.3 26.0M-471.1 389.0L58.3 26.0M-452.7 389.0L58.3 26.0M-434.4 389.0L58.3 26.0M-397.7 389.0L58.3 26.0M-379.3 389.0L58.3 26.0M-361.0 389.0L58.3 26.0M-342.6 389.0L58.3 26.0M-324.3 389.0L58.3 26.0M-305.9 389.0L58.3 26.0M-287.6 389.0L58.3 26.0M-269.2 389.0L58.3 26.0M-250.9 389.0L58.3 26.0M-214.2 389.0L58.3 26.0M-195.8 389.0L58.3 26.0M-177.5 389.0L58.3 26.0M-159.1 389.0L58.3 26.0M-140.8 389.0L58.3 26.0M-122.4 389.0L58.3 26.0M-104.1 389.0L58.3 26.0M-85.7 389.0L58.3 26.0M-67.4 389.0L58.3 26.0M-30.7 389.0L58.3 26.0M-12.3 389.0L58.3 26.0M6.0 389.0L58.3 26.0M24.4 389.0L58.3 26.0M42.8 389.0L58.3 26.0M61.1 389.0L58.3 26.0M79.4 389.0L58.3 26.0M97.8 389.0L58.3 26.0M116.2 389.0L58.3 26.0M152.8 389.0L58.3 26.0M171.2 389.0L58.3 26.0M189.6 389.0L58.3 26.0M207.9 389.0L58.3 26.0M226.2 389.0L58.3 26.0M244.6 389.0L58.3 26.0M263.0 389.0L58.3 26.0M281.3 389.0L58.3 26.0M299.6 389.0L58.3 26.0M336.4 389.0L58.3 26.0M354.7 389.0L58.3 26.0M373.1 389.0L58.3 26.0M391.4 389.0L58.3 26.0M409.8 389.0L58.3 26.0M428.1 389.0L58.3 26.0M446.5 389.0L58.3 26.0M464.8 389.0L58.3 26.0M483.2 389.0L58.3 26.0M519.9 389.0L58.3 26.0M538.2 389.0L58.3 26.0M556.5 389.0L58.3 26.0M574.9 389.0L58.3 26.0M593.2 389.0L58.3 26.0M611.6 389.0L58.3 26.0M630.0 389.0L58.3 26.0M648.3 389.0L58.3 26.0M666.7 389.0L58.3 26.0M703.4 389.0L58.3 26.0M721.7 389.0L58.3 26.0M740.1 389.0L58.3 26.0M758.4 389.0L58.3 26.0M776.8 389.0L58.3 26.0M795.1 389.0L58.3 26.0M813.5 389.0L58.3 26.0M831.8 389.0L58.3 26.0M850.2 389.0L58.3 26.0M886.9 389.0L58.3 26.0M905.2 389.0L58.3 26.0M923.6 389.0L58.3 26.0M941.9 389.0L58.3 26.0M960.3 389.0L58.3 26.0M978.6 389.0L58.3 26.0M997.0 389.0L58.3 26.0M1015.3 389.0L58.3 26.0M1033.7 389.0L58.3 26.0M1070.3 389.0L58.3 26.0M1088.7 389.0L58.3 26.0M1107.1 389.0L58.3 26.0M1125.4 389.0L58.3 26.0M1143.8 389.0L58.3 26.0M1162.1 389.0L58.3 26.0M1180.5 389.0L58.3 26.0M1198.8 389.0L58.3 26.0M1217.2 389.0L58.3 26.0M1253.9 389.0L58.3 26.0M1272.2 389.0L58.3 26.0M1290.6 389.0L58.3 26.0M1308.9 389.0L58.3 26.0M1327.2 389.0L58.3 26.0M1345.6 389.0L58.3 26.0M1364.0 389.0L58.3 26.0M1382.3 389.0L58.3 26.0M1400.7 389.0L58.3 26.0M1437.4 389.0L58.3 26.0M1455.7 389.0L58.3 26.0M1474.1 389.0L58.3 26.0M1492.4 389.0L58.3 26.0M1510.8 389.0L58.3 26.0M1529.1 389.0L58.3 26.0M1547.5 389.0L58.3 26.0M1565.8 389.0L58.3 26.0M1584.2 389.0L58.3 26.0M1620.9 389.0L58.3 26.0M1639.2 389.0L58.3 26.0M1657.6 389.0L58.3 26.0M1675.9 389.0L58.3 26.0M1694.3 389.0L58.3 26.0M1712.6 389.0L58.3 26.0M1731.0 389.0L58.3 26.0M1749.3 389.0L58.3 26.0M1767.7 389.0L58.3 26.0M1804.4 389.0L58.3 26.0M1822.7 389.0L58.3 26.0M1841.1 389.0L58.3 26.0M1859.4 389.0L58.3 26.0M1877.8 389.0L58.3 26.0M1896.1 389.0L58.3 26.0M1914.5 389.0L58.3 26.0M1932.8 389.0L58.3 26.0M1951.2 389.0L58.3 26.0M1987.9 389.0L58.3 26.0M2006.2 389.0L58.3 26.0M2024.6 389.0L58.3 26.0M2042.9 389.0L58.3 26.0M2061.2 389.0L58.3 26.0M2079.6 389.0L58.3 26.0M2097.9 389.0L58.3 26.0M2116.3 389.0L58.3 26.0M2134.7 389.0L58.3 26.0M2171.4 389.0L58.3 26.0M2189.7 389.0L58.3 26.0M2208.1 389.0L58.3 26.0M2226.4 389.0L58.3 26.0M2244.8 389.0L58.3 26.0M2263.1 389.0L58.3 26.0M2281.5 389.0L58.3 26.0M2299.8 389.0L58.3 26.0M2318.2 389.0L58.3 26.0M2354.9 389.0L58.3 26.0M2373.2 389.0L58.3 26.0M2391.6 389.0L58.3 26.0M2409.9 389.0L58.3 26.0M2428.2 389.0L58.3 26.0M2446.6 389.0L58.3 26.0M2465.0 389.0L58.3 26.0M2483.3 389.0L58.3 26.0M2501.7 389.0L58.3 26.0M2538.4 389.0L58.3 26.0M2556.7 389.0L58.3 26.0M2575.1 389.0L58.3 26.0M2593.4 389.0L58.3 26.0M2611.8 389.0L58.3 26.0M2630.1 389.0L58.3 26.0M2648.5 389.0L58.3 26.0M2666.8 389.0L58.3 26.0M2685.2 389.0L58.3 26.0M2721.9 389.0L58.3 26.0M2740.2 389.0L58.3 26.0M2758.6 389.0L58.3 26.0M2776.9 389.0L58.3 26.0M2795.2 389.0L58.3 26.0M2813.6 389.0L58.3 26.0M2832.0 389.0L58.3 26.0M2850.3 389.0L58.3 26.0M2868.7 389.0L58.3 26.0M2905.4 389.0L58.3 26.0M2923.7 389.0L58.3 26.0M2942.1 389.0L58.3 26.0M2960.4 389.0L58.3 26.0M2978.8 389.0L58.3 26.0M2997.1 389.0L58.3 26.0M3015.5 389.0L58.3 26.0M3033.8 389.0L58.3 26.0M3052.2 389.0L58.3 26.0M3088.9 389.0L58.3 26.0M3107.2 389.0L58.3 26.0M3125.6 389.0L58.3 26.0M3143.9 389.0L58.3 26.0M3162.3 389.0L58.3 26.0M3180.6 389.0L58.3 26.0M3199.0 389.0L58.3 26.0M3217.3 389.0L58.3 26.0M3235.7 389.0L58.3 26.0M3272.4 389.0L58.3 26.0M3290.7 389.0L58.3 26.0M3309.1 389.0L58.3 26.0M3327.4 389.0L58.3 26.0M3345.8 389.0L58.3 26.0M3364.1 389.0L58.3 26.0M3382.5 389.0L58.3 26.0M3400.8 389.0L58.3 26.0M3419.2 389.0L58.3 26.0M3455.9 389.0L58.3 26.0M3474.2 389.0L58.3 26.0M3492.6 389.0L58.3 26.0M3510.9 389.0L58.3 26.0M3529.3 389.0L58.3 26.0M3547.6 389.0L58.3 26.0M3566.0 389.0L58.3 26.0M3584.3 389.0L58.3 26.0M3602.7 389.0L58.3 26.0M3639.4 389.0L58.3 26.0M3657.7 389.0L58.3 26.0M3676.1 389.0L58.3 26.0M3694.4 389.0L58.3 26.0M3712.8 389.0L58.3 26.0M3731.1 389.0L58.3 26.0M3749.5 389.0L58.3 26.0M3767.8 389.0L58.3 26.0M3786.2 389.0L58.3 26.0M3822.9 389.0L58.3 26.0M3841.2 389.0L58.3 26.0M3859.6 389.0L58.3 26.0M3877.9 389.0L58.3 26.0M3896.3 389.0L58.3 26.0M3914.6 389.0L58.3 26.0M3933.0 389.0L58.3 26.0M3951.3 389.0L58.3 26.0M3969.7 389.0L58.3 26.0M4006.4 389.0L58.3 26.0M4024.7 389.0L58.3 26.0M4043.1 389.0L58.3 26.0M4061.4 389.0L58.3 26.0M4079.8 389.0L58.3 26.0M4098.1 389.0L58.3 26.0M4116.5 389.0L58.3 26.0M4134.8 389.0L58.3 26.0M4153.1 389.0L58.3 26.0M4189.9 389.0L58.3 26.0M4208.2 389.0L58.3 26.0M4226.6 389.0L58.3 26.0M4244.9 389.0L58.3 26.0M4263.2 389.0L58.3 26.0M4281.6 389.0L58.3 26.0M4300.0 389.0L58.3 26.0M4318.3 389.0L58.3 26.0M4336.7 389.0L58.3 26.0M4373.4 389.0L58.3 26.0M4391.7 389.0L58.3 26.0M4410.1 389.0L58.3 26.0M4428.4 389.0L58.3 26.0M4446.8 389.0L58.3 26.0M4465.1 389.0L58.3 26.0M4483.5 389.0L58.3 26.0M4501.8 389.0L58.3 26.0M4520.2 389.0L58.3 26.0M4556.9 389.0L58.3 26.0M4575.2 389.0L58.3 26.0M4593.6 389.0L58.3 26.0M4611.9 389.0L58.3 26.0M4630.2 389.0L58.3 26.0M4648.6 389.0L58.3 26.0M4667.0 389.0L58.3 26.0M4685.3 389.0L58.3 26.0M4703.7 389.0L58.3 26.0M4740.4 389.0L58.3 26.0M4758.7 389.0L58.3 26.0M4777.1 389.0L58.3 26.0M4795.4 389.0L58.3 26.0M4813.8 389.0L58.3 26.0M4832.1 389.0L58.3 26.0M4850.5 389.0L58.3 26.0M4868.8 389.0L58.3 26.0M4887.2 389.0L58.3 26.0M4923.9 389.0L58.3 26.0M4942.2 389.0L58.3 26.0M4960.6 389.0L58.3 26.0M4978.9 389.0L58.3 26.0M4997.2 389.0L58.3 26.0M5015.6 389.0L58.3 26.0M5034.0 389.0L58.3 26.0M5052.3 389.0L58.3 26.0M5070.7 389.0L58.3 26.0M5107.4 389.0L58.3 26.0M5125.7 389.0L58.3 26.0M5144.1 389.0L58.3 26.0M5162.4 389.0L58.3 26.0M5180.8 389.0L58.3 26.0M5199.1 389.0L58.3 26.0M5217.5 389.0L58.3 26.0M5235.8 389.0L58.3 26.0M5254.2 389.0L58.3 26.0M5290.9 389.0L58.3 26.0M5309.2 389.0L58.3 26.0M5327.6 389.0L58.3 26.0M5345.9 389.0L58.3 26.0M5364.2 389.0L58.3 26.0M5382.6 389.0L58.3 26.0M5401.0 389.0L58.3 26.0M5419.3 389.0L58.3 26.0M5437.7 389.0L58.3 26.0M5474.4 389.0L58.3 26.0M5492.7 389.0L58.3 26.0M5511.1 389.0L58.3 26.0M5529.4 389.0L58.3 26.0M5547.8 389.0L58.3 26.0M5566.1 389.0L58.3 26.0M5584.5 389.0L58.3 26.0M5602.8 389.0L58.3 26.0M5621.2 389.0L58.3 26.0" stroke="#8a8a8a" stroke-opacity="0.07" stroke-width="1" fill="none"/></g>
<g mask="url(#mg1)"><path d="M-21838.0 389.0L811.7 26.0M-21654.5 389.0L811.7 26.0M-21471.0 389.0L811.7 26.0M-21287.5 389.0L811.7 26.0M-21104.0 389.0L811.7 26.0M-20920.5 389.0L811.7 26.0M-20737.0 389.0L811.7 26.0M-20553.5 389.0L811.7 26.0M-20370.0 389.0L811.7 26.0M-20003.0 389.0L811.7 26.0M-19819.5 389.0L811.7 26.0M-19636.0 389.0L811.7 26.0M-19452.5 389.0L811.7 26.0M-19269.0 389.0L811.7 26.0M-19085.5 389.0L811.7 26.0M-18902.0 389.0L811.7 26.0M-18718.5 389.0L811.7 26.0M-18535.0 389.0L811.7 26.0M-18168.0 389.0L811.7 26.0M-17984.5 389.0L811.7 26.0M-17801.0 389.0L811.7 26.0M-17617.5 389.0L811.7 26.0M-17434.0 389.0L811.7 26.0M-17250.5 389.0L811.7 26.0M-17067.0 389.0L811.7 26.0M-16883.5 389.0L811.7 26.0M-16700.0 389.0L811.7 26.0M-16333.0 389.0L811.7 26.0M-16149.5 389.0L811.7 26.0M-15966.0 389.0L811.7 26.0M-15782.5 389.0L811.7 26.0M-15599.0 389.0L811.7 26.0M-15415.5 389.0L811.7 26.0M-15232.0 389.0L811.7 26.0M-15048.5 389.0L811.7 26.0M-14865.0 389.0L811.7 26.0M-14498.0 389.0L811.7 26.0M-14314.5 389.0L811.7 26.0M-14131.0 389.0L811.7 26.0M-13947.5 389.0L811.7 26.0M-13764.0 389.0L811.7 26.0M-13580.5 389.0L811.7 26.0M-13397.0 389.0L811.7 26.0M-13213.5 389.0L811.7 26.0M-13030.0 389.0L811.7 26.0M-12663.0 389.0L811.7 26.0M-12479.5 389.0L811.7 26.0M-12296.0 389.0L811.7 26.0M-12112.5 389.0L811.7 26.0M-11929.0 389.0L811.7 26.0M-11745.5 389.0L811.7 26.0M-11562.0 389.0L811.7 26.0M-11378.5 389.0L811.7 26.0M-11195.0 389.0L811.7 26.0M-10828.0 389.0L811.7 26.0M-10644.5 389.0L811.7 26.0M-10461.0 389.0L811.7 26.0M-10277.5 389.0L811.7 26.0M-10094.0 389.0L811.7 26.0M-9910.5 389.0L811.7 26.0M-9727.0 389.0L811.7 26.0M-9543.5 389.0L811.7 26.0M-9360.0 389.0L811.7 26.0M-8993.0 389.0L811.7 26.0M-8809.5 389.0L811.7 26.0M-8626.0 389.0L811.7 26.0M-8442.5 389.0L811.7 26.0M-8259.0 389.0L811.7 26.0M-8075.5 389.0L811.7 26.0M-7892.0 389.0L811.7 26.0M-7708.5 389.0L811.7 26.0M-7525.0 389.0L811.7 26.0M-7158.0 389.0L811.7 26.0M-6974.5 389.0L811.7 26.0M-6791.0 389.0L811.7 26.0M-6607.5 389.0L811.7 26.0M-6424.0 389.0L811.7 26.0M-6240.5 389.0L811.7 26.0M-6057.0 389.0L811.7 26.0M-5873.5 389.0L811.7 26.0M-5690.0 389.0L811.7 26.0M-5323.0 389.0L811.7 26.0M-5139.5 389.0L811.7 26.0M-4956.0 389.0L811.7 26.0M-4772.5 389.0L811.7 26.0M-4589.0 389.0L811.7 26.0M-4405.5 389.0L811.7 26.0M-4222.0 389.0L811.7 26.0M-4038.5 389.0L811.7 26.0M-3855.0 389.0L811.7 26.0M-3488.0 389.0L811.7 26.0M-3304.5 389.0L811.7 26.0M-3121.0 389.0L811.7 26.0M-2937.5 389.0L811.7 26.0M-2754.0 389.0L811.7 26.0M-2570.5 389.0L811.7 26.0M-2387.0 389.0L811.7 26.0M-2203.5 389.0L811.7 26.0M-2020.0 389.0L811.7 26.0M-1653.0 389.0L811.7 26.0M-1469.5 389.0L811.7 26.0M-1286.0 389.0L811.7 26.0M-1102.5 389.0L811.7 26.0M-919.0 389.0L811.7 26.0M-735.5 389.0L811.7 26.0M-552.0 389.0L811.7 26.0M-368.5 389.0L811.7 26.0M-185.0 389.0L811.7 26.0M182.0 389.0L811.7 26.0M365.5 389.0L811.7 26.0M549.0 389.0L811.7 26.0M732.5 389.0L811.7 26.0M916.0 389.0L811.7 26.0M1099.5 389.0L811.7 26.0M1283.0 389.0L811.7 26.0M1466.5 389.0L811.7 26.0M1650.0 389.0L811.7 26.0M2017.0 389.0L811.7 26.0M-2067.5 389.0L58.3 26.0M-1884.0 389.0L58.3 26.0M-1700.5 389.0L58.3 26.0M-1517.0 389.0L58.3 26.0M-1333.5 389.0L58.3 26.0M-1150.0 389.0L58.3 26.0M-783.0 389.0L58.3 26.0M-599.5 389.0L58.3 26.0M-416.0 389.0L58.3 26.0M-232.5 389.0L58.3 26.0M-49.0 389.0L58.3 26.0M134.5 389.0L58.3 26.0M318.0 389.0L58.3 26.0M501.5 389.0L58.3 26.0M685.0 389.0L58.3 26.0M1052.0 389.0L58.3 26.0M1235.5 389.0L58.3 26.0M1419.0 389.0L58.3 26.0M1602.5 389.0L58.3 26.0M1786.0 389.0L58.3 26.0M1969.5 389.0L58.3 26.0M2153.0 389.0L58.3 26.0M2336.5 389.0L58.3 26.0M2520.0 389.0L58.3 26.0M2887.0 389.0L58.3 26.0M3070.5 389.0L58.3 26.0M3254.0 389.0L58.3 26.0M3437.5 389.0L58.3 26.0M3621.0 389.0L58.3 26.0M3804.5 389.0L58.3 26.0M3988.0 389.0L58.3 26.0M4171.5 389.0L58.3 26.0M4355.0 389.0L58.3 26.0M4722.0 389.0L58.3 26.0M4905.5 389.0L58.3 26.0M5089.0 389.0L58.3 26.0M5272.5 389.0L58.3 26.0M5456.0 389.0L58.3 26.0M5639.5 389.0L58.3 26.0M5823.0 389.0L58.3 26.0M6006.5 389.0L58.3 26.0M6190.0 389.0L58.3 26.0M6557.0 389.0L58.3 26.0M6740.5 389.0L58.3 26.0M6924.0 389.0L58.3 26.0M7107.5 389.0L58.3 26.0M7291.0 389.0L58.3 26.0M7474.5 389.0L58.3 26.0M7658.0 389.0L58.3 26.0M7841.5 389.0L58.3 26.0M8025.0 389.0L58.3 26.0M8392.0 389.0L58.3 26.0M8575.5 389.0L58.3 26.0M8759.0 389.0L58.3 26.0M8942.5 389.0L58.3 26.0M9126.0 389.0L58.3 26.0M9309.5 389.0L58.3 26.0M9493.0 389.0L58.3 26.0M9676.5 389.0L58.3 26.0M9860.0 389.0L58.3 26.0M10227.0 389.0L58.3 26.0M10410.5 389.0L58.3 26.0M10594.0 389.0L58.3 26.0M10777.5 389.0L58.3 26.0M10961.0 389.0L58.3 26.0M11144.5 389.0L58.3 26.0M11328.0 389.0L58.3 26.0M11511.5 389.0L58.3 26.0M11695.0 389.0L58.3 26.0M12062.0 389.0L58.3 26.0M12245.5 389.0L58.3 26.0M12429.0 389.0L58.3 26.0M12612.5 389.0L58.3 26.0M12796.0 389.0L58.3 26.0M12979.5 389.0L58.3 26.0M13163.0 389.0L58.3 26.0M13346.5 389.0L58.3 26.0M13530.0 389.0L58.3 26.0M13897.0 389.0L58.3 26.0M14080.5 389.0L58.3 26.0M14264.0 389.0L58.3 26.0M14447.5 389.0L58.3 26.0M14631.0 389.0L58.3 26.0M14814.5 389.0L58.3 26.0M14998.0 389.0L58.3 26.0M15181.5 389.0L58.3 26.0M15365.0 389.0L58.3 26.0M15732.0 389.0L58.3 26.0M15915.5 389.0L58.3 26.0M16099.0 389.0L58.3 26.0M16282.5 389.0L58.3 26.0M16466.0 389.0L58.3 26.0M16649.5 389.0L58.3 26.0M16833.0 389.0L58.3 26.0M17016.5 389.0L58.3 26.0M17200.0 389.0L58.3 26.0M17567.0 389.0L58.3 26.0M17750.5 389.0L58.3 26.0M17934.0 389.0L58.3 26.0M18117.5 389.0L58.3 26.0M18301.0 389.0L58.3 26.0M18484.5 389.0L58.3 26.0M18668.0 389.0L58.3 26.0M18851.5 389.0L58.3 26.0M19035.0 389.0L58.3 26.0M19402.0 389.0L58.3 26.0M19585.5 389.0L58.3 26.0M19769.0 389.0L58.3 26.0M19952.5 389.0L58.3 26.0M20136.0 389.0L58.3 26.0M20319.5 389.0L58.3 26.0M20503.0 389.0L58.3 26.0M20686.5 389.0L58.3 26.0M20870.0 389.0L58.3 26.0M21237.0 389.0L58.3 26.0M21420.5 389.0L58.3 26.0M21604.0 389.0L58.3 26.0M21787.5 389.0L58.3 26.0M21971.0 389.0L58.3 26.0" stroke="#8e8e8e" stroke-opacity="0.42" stroke-width="1" fill="none"/></g>
<g mask="url(#mg10)"><path d="M-22021.5 389.0L811.7 26.0M-20186.5 389.0L811.7 26.0M-18351.5 389.0L811.7 26.0M-16516.5 389.0L811.7 26.0M-14681.5 389.0L811.7 26.0M-12846.5 389.0L811.7 26.0M-11011.5 389.0L811.7 26.0M-9176.5 389.0L811.7 26.0M-7341.5 389.0L811.7 26.0M-5506.5 389.0L811.7 26.0M-3671.5 389.0L811.7 26.0M-1836.5 389.0L811.7 26.0M-1.5 389.0L811.7 26.0M1833.5 389.0L811.7 26.0M-966.5 389.0L58.3 26.0M868.5 389.0L58.3 26.0M2703.5 389.0L58.3 26.0M4538.5 389.0L58.3 26.0M6373.5 389.0L58.3 26.0M8208.5 389.0L58.3 26.0M10043.5 389.0L58.3 26.0M11878.5 389.0L58.3 26.0M13713.5 389.0L58.3 26.0M15548.5 389.0L58.3 26.0M17383.5 389.0L58.3 26.0M19218.5 389.0L58.3 26.0M21053.5 389.0L58.3 26.0" stroke="#8e8e8e" stroke-opacity="0.5" stroke-width="1" fill="none"/></g></svg>
</div>
<!-- gizmo -->
<svg style="left:750px;top:145px;will-change:transform" width="110" height="100" viewBox="0 0 110 100">
<g transform="translate(57,62)">
<path d="M-9 -5 L-15.5 -17.5 C-20 -19.5 -25 -15.5 -25.2 -9.5 L-24 -6 Z" fill="#e8e8e8"/>
<path d="M9 -5 L15.5 -17.5 C20 -19.5 25 -15.5 25.2 -9.5 L24 -6 Z" fill="#e8e8e8"/>
<path d="M0 10 L-6.5 25.5 Q-6 29.5 0 29.5 Q6 29.5 6.5 25.5 Z" fill="#ececec"/>
<path d="M-12 -8L0 -13.5L12 -8L12 5L0 10.5L-12 5Z" fill="#a7aaab"/>
<path d="M-12 -8L0 -13.5L12 -8L0 -3Z" fill="#b3b6b6"/>
<path d="M-10 -39 L10 -39 L0 -13.5Z" fill="#7eaa57"/>
<path d="M-10 -39 L0 -13.5 L10 -39" fill="none" stroke="#1e1e1e" stroke-width="0.8"/>
<path d="M-37.5 2 L-9 2 L-27.6 22 Q-35.5 13 -37.5 2Z" fill="#6b3526"/>
<path d="M-9 2 L-27.6 22" stroke="#111" stroke-width="0.9"/>
<path d="M37.5 2 L9 2 L27.6 22 Q35.5 13 37.5 2Z" fill="#2c5bbf"/>
<path d="M9 2 L27.6 22" stroke="#111" stroke-width="0.9"/>
</g>
<text x="8.5" y="81.5" font-family="Liberation Sans" font-weight="bold" font-size="13" fill="#ffffff">x</text>
<text x="94" y="81.5" font-family="Liberation Sans" font-weight="bold" font-size="13" fill="#ffffff">z</text>
<text x="52" y="17.5" font-family="Liberation Sans" font-weight="bold" font-size="13" fill="#ffffff">y</text>
</svg>
<svg style="left:845px;top:157px" width="10" height="12" viewBox="0 0 10 12"><path d="M2.5 5V3A2.5 2.5 0 0 1 7.5 3" fill="none" stroke="#d8d8d8" stroke-width="1.2"/><rect x="0.5" y="5" width="9" height="6.5" fill="#d8d8d8"/></svg>
<svg style="left:776px;top:260px" width="14" height="14" viewBox="0 0 14 14"><path d="M13 1.5L1 6.5L13 11.5M13 6.5H4" fill="none" stroke="#cfcfcf" stroke-width="1.1"/></svg>
<div class="t" style="left:792px;top:257px;font-size:15px;line-height:15px;color:#cfcfcf;letter-spacing:0.1px">Persp</div>
<!-- HIERARCHY -->
<div class="tabbar" style="left:872px;top:91px;width:346px;height:24px"></div>
<div class="tab" style="left:872px;top:91px;width:121px;height:24px"></div>
<svg style="left:883px;top:97px" width="14" height="12" viewBox="0 0 14 12"><g fill="#c4c4c4"><path d="M0 0.5L2 0L2.5 2Z"/><rect x="3" y="0.5" width="10.5" height="1.2"/><rect x="3" y="4" width="2" height="1.5"/><rect x="6" y="4" width="7.5" height="1.2"/><rect x="3" y="7.5" width="2" height="1.5"/><rect x="6" y="7.5" width="7.5" height="1.2"/><rect x="6" y="10.5" width="7.5" height="1.2"/><rect x="3" y="10.5" width="2" height="1.5"/></g></svg>
<div class="t" style="left:902px;top:95px">Hierarchy</div>
<svg style="left:1176px;top:96px" width="11" height="12" viewBox="0 0 11 12"><path d="M2.2 2.4C3.2 0.6 7.8 0.3 8.6 3V6" fill="none" stroke="#c4c4c4" stroke-width="1.2"/><rect x="0.6" y="6.1" width="9.3" height="5.3" fill="none" stroke="#c4c4c4" stroke-width="1.2"/></svg>
<div class="keb" style="left:1201px;top:96px"><i style="top:0"></i><i style="top:4.5px"></i><i style="top:9px"></i></div>
<div class="tb" style="left:872px;top:115px;width:346px;height:25px"></div>
<div class="a" style="left:872px;top:140px;width:346px;height:1px;background:#232323"></div>
<svg style="left:880px;top:120px" width="17" height="17"><path d="M8 0V16M0 8H16" stroke="#c4c4c4" stroke-width="1.6"/></svg>
<div class="arr" style="left:901px;top:125px"></div>
<div class="srch" style="left:926px;top:117px;width:289px;height:20px"></div>
<svg style="left:930px;top:121px" width="14" height="12" viewBox="0 0 14 12"><circle cx="4" cy="4" r="3" fill="none" stroke="#c4c4c4" stroke-width="1.4"/><path d="M6 6L9.5 9.5" stroke="#c4c4c4" stroke-width="1.6"/><path d="M9.5 4H13L11.25 6Z" fill="#c4c4c4"/></svg>
<div class="t" style="left:950px;top:117px;font-size:15px;line-height:15px;color:#7f7f7f">All</div>
<div class="a" style="left:872px;top:141px;width:346px;height:307px;background:#383838"></div>
<div class="a" style="left:872px;top:160px;width:40px;height:288px;background:#2d2d2d"></div>
<div class="a" style="left:872px;top:141px;width:346px;height:19px;background:#515151"></div><div class="a" style="left:872px;top:160px;width:346px;height:1px;background:#2c2c2c"></div>
<svg style="left:915px;top:147px" width="11" height="10"><path d="M0 0H10L5 9Z" fill="#8a8a8a"/></svg>
<svg style="left:930px;top:143px" width="18" height="15" viewBox="0 0 18 15"><g stroke="#e2e6e8" stroke-width="1.3" fill="none" stroke-linejoin="round"><path d="M2 7.4L8 2.5L14 1.1C15.6 4.5 15.6 9.5 14 13.3L8 11.8Z"/><path d="M2 7.4H10.3L14 1.1M10.3 7.4L14 13.3"/></g></svg>
<div class="t" style="left:953px;top:142px;font-weight:bold;letter-spacing:-0.28px;color:#d2d2d2">SampleScene</div>
<div class="keb" style="left:1202px;top:146px"><i style="top:0"></i><i style="top:4.5px"></i><i style="top:9px"></i></div>
<svg style="left:947px;top:162px" width="18" height="18" viewBox="0 0 18 18"><g stroke="#c4c4c4" stroke-width="1.2" fill="none" stroke-linejoin="round"><path d="M9 1.5L16 5V13L9 16.5L2 13V5Z"/><path d="M2 5L9 8.5L16 5M9 8.5V16.5"/></g></svg>
<div class="t" style="left:970px;top:162px">Main Camera</div>
<svg style="left:947px;top:182px" width="18" height="18" viewBox="0 0 18 18"><g stroke="#c4c4c4" stroke-width="1.2" fill="none" stroke-linejoin="round"><path d="M9 1.5L16 5V13L9 16.5L2 13V5Z"/><path d="M2 5L9 8.5L16 5M9 8.5V16.5"/></g></svg>
<div class="t" style="left:970px;top:182px;letter-spacing:0.2px">Directional Light</div>

<!-- INSPECTOR -->
<div class="tabbar" style="left:1221px;top:91px;width:379px;height:24px;border-radius:5px 0 0 0"></div>
<div class="tab" style="left:1221px;top:91px;width:118px;height:24px"></div>
<svg style="left:1233px;top:98px" width="13" height="13" viewBox="0 0 13 13"><circle cx="6.5" cy="6.5" r="6" fill="#c4c4c4"/><rect x="5.5" y="2" width="2.2" height="2" fill="#3c3c3c"/><rect x="5.5" y="5" width="2.2" height="6" fill="#3c3c3c"/></svg>
<div class="t" style="left:1251px;top:95px;letter-spacing:0.3px">Inspector</div>
<svg style="left:1563px;top:96px" width="11" height="12" viewBox="0 0 11 12"><path d="M2.2 2.4C3.2 0.6 7.8 0.3 8.6 3V6" fill="none" stroke="#c4c4c4" stroke-width="1.2"/><rect x="0.6" y="6.1" width="9.3" height="5.3" fill="none" stroke="#c4c4c4" stroke-width="1.2"/></svg>
<div class="keb" style="left:1588px;top:96px"><i style="top:0"></i><i style="top:4.5px"></i><i style="top:9px"></i></div>
<div class="a" style="left:1221px;top:115px;width:379px;height:710px;background:#383838"></div>

<!-- PROJECT -->
<div class="tabbar" style="left:872px;top:450px;width:346px;height:24px"></div>
<div class="tab" style="left:872px;top:450px;width:103px;height:24px"></div>
<div class="a" style="left:872px;top:450px;width:103px;height:2px;background:#3a79bb;border-radius:2px 2px 0 0"></div>
<svg style="left:883px;top:456px" width="14" height="12" viewBox="0 0 14 12"><path d="M0 0.5H5L6.5 2H13.5V11.5H0Z" fill="#c4c4c4"/></svg>
<div class="t" style="left:902px;top:453.5px">Project</div>
<svg style="left:1176px;top:455px" width="11" height="12" viewBox="0 0 11 12"><path d="M2.2 2.4C3.2 0.6 7.8 0.3 8.6 3V6" fill="none" stroke="#c4c4c4" stroke-width="1.2"/><rect x="0.6" y="6.1" width="9.3" height="5.3" fill="none" stroke="#c4c4c4" stroke-width="1.2"/></svg>
<div class="keb" style="left:1201px;top:455px"><i style="top:0"></i><i style="top:4.5px"></i><i style="top:9px"></i></div>
<div class="tb" style="left:872px;top:474px;width:346px;height:25px"></div>
<div class="a" style="left:872px;top:499px;width:346px;height:1px;background:#232323"></div>
<svg style="left:880px;top:478px" width="17" height="17"><path d="M8 0V16M0 8H16" stroke="#c4c4c4" stroke-width="1.6"/></svg>
<div class="arr" style="left:901px;top:483px"></div>
<div class="srch" style="left:928px;top:476px;width:140px;height:20px"></div>
<svg style="left:934px;top:481px" width="11" height="11" viewBox="0 0 11 11"><circle cx="4" cy="4" r="3" fill="none" stroke="#c4c4c4" stroke-width="1.4"/><path d="M6 6L9.5 9.5" stroke="#c4c4c4" stroke-width="1.6"/></svg>
<div class="a" style="left:1071px;top:474px;width:1px;height:25px;background:#2b2b2b"></div>
<div class="a" style="left:1103px;top:474px;width:1px;height:25px;background:#2b2b2b"></div>
<div class="a" style="left:1136px;top:474px;width:1px;height:25px;background:#2b2b2b"></div>
<div class="a" style="left:1168px;top:474px;width:1px;height:25px;background:#2b2b2b"></div>
<svg style="left:1079px;top:477px" width="17" height="17" viewBox="0 0 17 17"><g fill="#c4c4c4"><rect x="2" y="0" width="7" height="7.5"/><circle cx="5.2" cy="12" r="4.2"/><path d="M12 5L15.5 11.3H8.5Z"/></g></svg>
<svg style="left:1112px;top:479px" width="15" height="14" viewBox="0 0 15 14"><path d="M6.5 1H14V8.5L7 13.5L1 7.5Z" fill="#c4c4c4"/><rect x="9.5" y="3" width="2" height="2" fill="#3c3c3c"/></svg>
<svg style="left:1144px;top:478px" width="16" height="15" viewBox="0 0 16 15"><path d="M8 0.5L10 5.3L15 5.6L11.2 8.8L12.4 13.8L8 11.1L3.6 13.8L4.8 8.8L1 5.6L6 5.3Z" fill="#7f7f7f"/></svg>
<svg style="left:1175px;top:476px" width="20" height="17" viewBox="0 0 20 17"><path d="M1.5 9.5C4 6 7 4.2 10 4.2C13 4.2 16 6 18.5 9.5C16 13 13 14.5 10 14.5C7 14.5 4 13 1.5 9.5Z" fill="none" stroke="#c4c4c4" stroke-width="1.3"/><path d="M6.2 10A3.9 3.9 0 0 1 13.2 7.2L7.5 12.8A3.9 3.9 0 0 1 6.2 10Z" fill="#c4c4c4"/><path d="M2.8 15.8L16.5 1.8" stroke="#3c3c3c" stroke-width="3.2"/><path d="M2.8 15.8L16.5 1.8" stroke="#c4c4c4" stroke-width="1.5"/></svg>
<svg style="left:1197px;top:480px" width="15" height="13" viewBox="0 0 15 13"><g fill="#c4c4c4"><path d="M3.6 0.4H5.2V12.6H3.6V2.6L1 4.2V2.5Z"/><path d="M11.1 0.4H12.7V12.6H11.1V2.6L8.5 4.2V2.5Z"/></g></svg>

<div class="a" style="left:872px;top:500px;width:346px;height:325px;background:#383838"></div>
<div class="a" style="left:1011px;top:500px;width:207px;height:325px;background:#333333"></div>
<div class="a" style="left:1010px;top:500px;width:1px;height:325px;background:#232323"></div>
<div class="a" style="left:993px;top:500px;width:17px;height:325px;background:#3a3a3a"></div>
<div class="a" style="left:996px;top:575px;width:13px;height:208px;background:#5f5f5f;border-radius:6px"></div>
<svg style="left:997px;top:506px" width="10" height="7"><path d="M0 6H10L5 0Z" fill="#c4c4c4"/></svg>
<svg style="left:997px;top:812px" width="10" height="7"><path d="M0 0H10L5 6Z" fill="#c4c4c4"/></svg>
<div class="a" style="left:872px;top:500px;width:121px;height:20px;background:#4d4d4d"></div>
<div class="a" style="left:1011px;top:500px;width:207px;height:25px;background:#3e3e3e"></div>
<div class="a" style="left:1011px;top:800px;width:207px;height:25px;background:#3e3e3e"></div><div class="a" style="left:1011px;top:799px;width:207px;height:1px;background:#232323"></div>
<div class="a" style="left:1130px;top:806px;width:13px;height:13px;border-radius:7px;background:#999999"></div>
<div class="a" style="left:1142px;top:811px;width:57px;height:3px;background:#666666"></div>
<div class="t" style="left:1016px;top:504px;font-weight:bold;letter-spacing:-0.1px">Assets</div>
<svg style="left:1033px;top:530px" width="16" height="13" viewBox="0 0 16 13"><path d="M0 0.5H6L7.5 2.5H15V12.5H0Z" fill="#c4c4c4"/></svg>
<div class="t" style="left:1053px;top:528px">Plugins</div>
<svg style="left:1033px;top:550px" width="16" height="13" viewBox="0 0 16 13"><path d="M0 0.5H6L7.5 2.5H15V12.5H0Z" fill="#c4c4c4"/></svg>
<div class="t" style="left:1053px;top:547.5px">Scenes</div>
<!-- tree -->
<div class="a" style="left:872px;top:500px;width:121px;height:325px;overflow:hidden">
<svg style="left:6px;top:7px" width="11" height="10"><path d="M0 0H10.5L5.25 9Z" fill="#7a7a7a"/></svg><svg style="left:23px;top:4px" width="17" height="14" viewBox="0 0 17 14"><path d="M0.7 12.5V1.2H5.5L7 2.8H13.5V5" fill="none" stroke="#c4c4c4" stroke-width="1.4"/><path d="M0.5 13H13.5L16.5 5.5H3.5Z" fill="#c4c4c4"/></svg><div class="t" style="left:44.5px;top:1px;letter-spacing:0.6px;font-weight:bold;">Assets</div><svg style="left:23px;top:27px" width="11" height="10"><path d="M0 0H10.5L5.25 9Z" fill="#7a7a7a"/></svg><svg style="left:40.6px;top:24px" width="17" height="14" viewBox="0 0 17 14"><path d="M0.7 12.5V1.2H5.5L7 2.8H13.5V5" fill="none" stroke="#c4c4c4" stroke-width="1.4"/><path d="M0.5 13H13.5L16.5 5.5H3.5Z" fill="#c4c4c4"/></svg><div class="t" style="left:60.5px;top:21px;letter-spacing:0.6px;">Plugins</div><svg style="left:42px;top:45px" width="10" height="11"><path d="M0 0V10.5L9 5.25Z" fill="#7a7a7a"/></svg><svg style="left:57.6px;top:44px" width="16" height="13" viewBox="0 0 16 13"><path d="M0 0.5H6L7.5 2.5H15V12.5H0Z" fill="#c4c4c4"/></svg><div class="t" style="left:78px;top:41px;letter-spacing:0.6px;">GLTFUtility</div><svg style="left:40px;top:67px" width="11" height="10"><path d="M0 0H10.5L5.25 9Z" fill="#7a7a7a"/></svg><svg style="left:57px;top:64px" width="17" height="14" viewBox="0 0 17 14"><path d="M0.7 12.5V1.2H5.5L7 2.8H13.5V5" fill="none" stroke="#c4c4c4" stroke-width="1.4"/><path d="M0.5 13H13.5L16.5 5.5H3.5Z" fill="#c4c4c4"/></svg><div class="t" style="left:78px;top:61px;letter-spacing:0.6px;">WebView</div><svg style="left:75.8px;top:84px" width="16" height="13" viewBox="0 0 16 13"><path d="M0 0.5H6L7.5 2.5H15V12.5H0Z" fill="#c4c4c4"/></svg><div class="t" style="left:95px;top:81px;letter-spacing:0.6px;">Android</div><svg style="left:75.8px;top:104px" width="16" height="13" viewBox="0 0 16 13"><path d="M0 0.5H6L7.5 2.5H15V12.5H0Z" fill="#c4c4c4"/></svg><div class="t" style="left:95px;top:101px;letter-spacing:0.6px;">Editor</div><svg style="left:75.8px;top:124px" width="16" height="13" viewBox="0 0 16 13"><path d="M0 0.5H6L7.5 2.5H15V12.5H0Z" fill="#c4c4c4"/></svg><div class="t" style="left:95px;top:121px;letter-spacing:0.6px;">IOS</div><svg style="left:75.8px;top:144px" width="16" height="13" viewBox="0 0 16 13"><path d="M0 0.5H6L7.5 2.5H15V12.5H0Z" fill="#c4c4c4"/></svg><div class="t" style="left:95px;top:141px;letter-spacing:0.6px;">Resources</div><svg style="left:59px;top:165px" width="10" height="11"><path d="M0 0V10.5L9 5.25Z" fill="#7a7a7a"/></svg><svg style="left:75.8px;top:164px" width="16" height="13" viewBox="0 0 16 13"><path d="M0 0.5H6L7.5 2.5H15V12.5H0Z" fill="#c4c4c4"/></svg><div class="t" style="left:95px;top:161px;letter-spacing:0.6px;">Scripts</div><svg style="left:40px;top:187px" width="11" height="10"><path d="M0 0H10.5L5.25 9Z" fill="#7a7a7a"/></svg><svg style="left:57px;top:184px" width="17" height="14" viewBox="0 0 17 14"><path d="M0.7 12.5V1.2H5.5L7 2.8H13.5V5" fill="none" stroke="#c4c4c4" stroke-width="1.4"/><path d="M0.5 13H13.5L16.5 5.5H3.5Z" fill="#c4c4c4"/></svg><div class="t" style="left:78px;top:181px;letter-spacing:0.6px;">Wolf3D</div><svg style="left:75.8px;top:204px" width="16" height="13" viewBox="0 0 16 13"><path d="M0 0.5H6L7.5 2.5H15V12.5H0Z" fill="#c4c4c4"/></svg><div class="t" style="left:95px;top:201px;letter-spacing:0.6px;">Editor</div><svg style="left:57px;top:227px" width="11" height="10"><path d="M0 0H10.5L5.25 9Z" fill="#7a7a7a"/></svg><svg style="left:75px;top:224px" width="17" height="14" viewBox="0 0 17 14"><path d="M0.7 12.5V1.2H5.5L7 2.8H13.5V5" fill="none" stroke="#c4c4c4" stroke-width="1.4"/><path d="M0.5 13H13.5L16.5 5.5H3.5Z" fill="#c4c4c4"/></svg><div class="t" style="left:95px;top:221px;letter-spacing:0.6px;">Examples</div><svg style="left:92.6px;top:244px" width="16" height="13" viewBox="0 0 16 13"><path d="M0 0.5H6L7.5 2.5H15V12.5H0Z" fill="#c4c4c4"/></svg><div class="t" style="left:113.7px;top:241px;letter-spacing:0.6px;">Resources</div><svg style="left:92.6px;top:264px" width="16" height="13" viewBox="0 0 16 13"><path d="M0 0.5H6L7.5 2.5H15V12.5H0Z" fill="#c4c4c4"/></svg><div class="t" style="left:113.7px;top:261px;letter-spacing:0.6px;">WebView</div><svg style="left:59px;top:285px" width="10" height="11"><path d="M0 0V10.5L9 5.25Z" fill="#7a7a7a"/></svg><svg style="left:75.8px;top:284px" width="16" height="13" viewBox="0 0 16 13"><path d="M0 0.5H6L7.5 2.5H15V12.5H0Z" fill="#c4c4c4"/></svg><div class="t" style="left:95px;top:281px;letter-spacing:0.6px;">Resources</div><svg style="left:59px;top:305px" width="10" height="11"><path d="M0 0V10.5L9 5.25Z" fill="#7a7a7a"/></svg><svg style="left:75.8px;top:304px" width="16" height="13" viewBox="0 0 16 13"><path d="M0 0.5H6L7.5 2.5H15V12.5H0Z" fill="#c4c4c4"/></svg><div class="t" style="left:95px;top:301px;letter-spacing:0.6px;">Scripts</div><svg style="left:40.6px;top:324px" width="16" height="13" viewBox="0 0 16 13"><path d="M0 0.5H6L7.5 2.5H15V12.5H0Z" fill="#c4c4c4"/></svg><div class="t" style="left:60.5px;top:321px;letter-spacing:0.6px;">Scenes</div>
</div>
<!-- CONSOLE -->
<div class="tabbar" style="left:0;top:532px;width:588px;height:24px;border-radius:0 5px 0 0"></div>
<div class="tab" style="left:112px;top:532px;width:109px;height:24px"></div>
<svg style="left:6px;top:539px" width="14" height="12" viewBox="0 0 14 12"><g stroke="#c4c4c4" stroke-width="1.5" fill="none"><path d="M0.5 0.8C3 1.5 5 3.5 6 5.5H12"/><path d="M1 11.5C2 9 3.5 6.5 6 5.5"/><path d="M9.5 2.5L12.5 5.5L9.5 8.5"/></g></svg>
<div class="t" style="left:24px;top:536px">Animator</div>
<svg style="left:123px;top:538px" width="13" height="14" viewBox="0 0 13 14"><rect x="0" y="0" width="12" height="13" fill="#c4c4c4"/><g fill="#3c3c3c"><rect x="1.3" y="2.2" width="9.4" height="1.5"/><rect x="1.3" y="5.7" width="9.4" height="1.5"/><rect x="1.3" y="9.2" width="9.4" height="1.5"/></g></svg>
<div class="t" style="left:141px;top:536px">Console</div>
<svg style="left:233px;top:538px" width="15" height="15" viewBox="0 0 15 15"><circle cx="7.5" cy="7.5" r="7" fill="#c4c4c4"/><path d="M7 3.5V8H10.5" stroke="#282828" stroke-width="1.6" fill="none"/></svg>
<div class="t" style="left:252px;top:536px">Animation</div>
<div class="keb" style="left:570px;top:537px"><i style="top:0"></i><i style="top:4.5px"></i><i style="top:9px"></i></div>
<div class="tb" style="left:0;top:556px;width:588px;height:25px"></div>
<div class="a" style="left:0;top:581px;width:588px;height:1px;background:#232323"></div>
<div class="t" style="left:1px;top:560px">Clear</div>
<div class="a" style="left:46px;top:561px;width:1px;height:15px;background:#2b2b2b"></div>
<div class="arr" style="left:52px;top:566px"></div>
<div class="a" style="left:67px;top:556px;width:1px;height:25px;background:#2b2b2b"></div>
<div class="t" style="left:73px;top:560px;letter-spacing:-0.1px">Collapse</div>
<div class="a" style="left:143px;top:556px;width:1px;height:25px;background:#2b2b2b"></div>
<div class="t" style="left:151px;top:560px;letter-spacing:-0.45px">Error Pause</div>
<div class="a" style="left:238px;top:556px;width:1px;height:25px;background:#2b2b2b"></div>
<div class="t" style="left:243px;top:560px">Editor</div>
<div class="arr" style="left:288px;top:566px"></div>
<div class="a" style="left:303px;top:556px;width:1px;height:25px;background:#2b2b2b"></div>
<div class="srch" style="left:306px;top:558px;width:151px;height:20px"></div>
<svg style="left:312px;top:563px" width="11" height="11" viewBox="0 0 11 11"><circle cx="4" cy="4" r="3" fill="none" stroke="#c4c4c4" stroke-width="1.4"/><path d="M6 6L9.5 9.5" stroke="#c4c4c4" stroke-width="1.6"/></svg>
<div class="a" style="left:458px;top:556px;width:1px;height:25px;background:#2b2b2b"></div>
<div class="a" style="left:501px;top:556px;width:1px;height:25px;background:#2b2b2b"></div>
<div class="a" style="left:543px;top:556px;width:1px;height:25px;background:#2b2b2b"></div>
<div class="a" style="left:544px;top:556px;width:42px;height:25px;background:#4d4d4d"></div>
<div class="a" style="left:586px;top:556px;width:1px;height:25px;background:#2b2b2b"></div>
<svg style="left:466px;top:559px" width="17" height="18" viewBox="0 0 17 18"><path d="M8 0.5A7.5 7.5 0 1 0 8 15.5L13 17.5L12.5 13.5A7.5 7.5 0 0 0 8 0.5Z" fill="#808080"/><rect x="6.8" y="3.5" width="2.4" height="6.5" rx="1" fill="#3c3c3c"/><rect x="6.8" y="11" width="2.4" height="2.2" fill="#3c3c3c"/></svg>
<div class="t" style="left:487px;top:560px">0</div>
<svg style="left:508px;top:558px" width="18" height="18" viewBox="0 0 18 18"><path d="M9 0.5L17.5 17H0.5Z" fill="#e4a03a"/><path d="M0.5 17H17.5" stroke="#8a3a20" stroke-width="0.8"/><rect x="8" y="5" width="2" height="7" fill="#3c3c3c"/><rect x="8" y="13.5" width="2" height="2" fill="#3c3c3c"/></svg>
<div class="t" style="left:529px;top:560px">2</div>
<svg style="left:551px;top:559px" width="17" height="17" viewBox="0 0 17 17"><path d="M5 0.5H12L16.5 5V12L12 16.5H5L0.5 12V5Z" fill="#c4c4c4"/><rect x="7.3" y="3.5" width="2.4" height="7" rx="1" fill="#4d4d4d"/><rect x="7.3" y="11.5" width="2.4" height="2.2" fill="#4d4d4d"/></svg>
<div class="t" style="left:572px;top:560px">0</div>
<div class="a" style="left:0;top:582px;width:588px;height:243px;background:#383838"></div>
<div class="a" style="left:0;top:748px;width:588px;height:1px;background:#232323"></div><div class="a" style="left:0;top:823px;width:588px;height:1px;background:#262626"></div>

<!-- GAME -->
<div class="tabbar" style="left:590px;top:532px;width:280px;height:24px"></div>
<div class="tab" style="left:590px;top:532px;width:94px;height:24px"></div>
<svg style="left:599px;top:540px" width="18" height="11" viewBox="0 0 18 11"><path d="M4.5 0.5H13.5C16 0.5 17.5 2.5 17.5 5.5C17.5 8.5 16.5 10.5 14.5 10.5C13 10.5 12 9 11 8H7C6 9 5 10.5 3.5 10.5C1.5 10.5 0.5 8.5 0.5 5.5C0.5 2.5 2 0.5 4.5 0.5Z" fill="#c4c4c4"/><path d="M4.5 3V7M2.5 5H6.5" stroke="#3c3c3c" stroke-width="1.3"/><circle cx="12" cy="6.3" r="1" fill="#3c3c3c"/><circle cx="14" cy="4.3" r="1" fill="#3c3c3c"/></svg>
<div class="t" style="left:620px;top:536px">Game</div>
<div class="keb" style="left:852px;top:537px"><i style="top:0"></i><i style="top:4.5px"></i><i style="top:9px"></i></div>
<div class="tb" style="left:590px;top:556px;width:280px;height:25px"></div>
<div class="a" style="left:590px;top:581px;width:280px;height:1px;background:#232323"></div>
<div class="t" style="left:595px;top:560px">Display 1</div>
<div class="arr" style="left:675px;top:566px"></div>
<div class="a" style="left:690px;top:556px;width:1px;height:25px;background:#2b2b2b"></div>
<div class="t" style="left:695px;top:560px">Free Aspect</div>
<div class="a" style="left:590px;top:582px;width:280px;height:243px;background:#282828;box-shadow:inset 0 16px 16px -8px rgba(0,0,0,0.32),inset 10px 0 10px -6px rgba(0,0,0,0.18)"></div>
<div class="a" style="left:618px;top:607px;width:224px;height:194px;background:linear-gradient(to bottom,#56709b 0px,#5b76a0 25px,#6a89b3 55px,#88a6c9 75px,#b9d4e6 86px,#e2f7f8 92px,#eefffd 97px,#e4f3ef 101px,#a2a39d 104px,#746d67 107px,#6b635d 125px,#6b625c 194px)"></div>

<!-- STATUS -->
<div class="a" style="left:1475px;top:830px;width:1px;height:18px;background:#262626"></div>
<div class="a" style="left:1507px;top:830px;width:1px;height:18px;background:#262626"></div>
<div class="a" style="left:1541px;top:830px;width:1px;height:18px;background:#262626"></div>
<div class="a" style="left:1573px;top:830px;width:1px;height:18px;background:#262626"></div>
<svg style="left:1482px;top:830px" width="19" height="18" viewBox="0 0 19 18"><path d="M9.5 4C6 4 4 7 4 11C4 15 6.5 18 9.5 18C12.5 18 15 15 15 11C15 7 13 4 9.5 4Z" fill="#c4c4c4"/><g stroke="#c4c4c4" stroke-width="1.2"><path d="M5 6L2 3.5M14 6L17 3.5M4 11H0.5M15 11H18.5M4.5 15L2 17.5M14.5 15L17 17.5"/></g><path d="M1.5 0.5L17.5 17.5" stroke="#191919" stroke-width="2.8"/><path d="M1.5 0.5L17.5 17.5" stroke="#c4c4c4" stroke-width="1"/></svg>
<svg style="left:1514px;top:830px" width="19" height="18" viewBox="0 0 19 18"><g fill="#c4c4c4"><ellipse cx="9.5" cy="4.5" rx="7" ry="3"/><path d="M2.5 6.5C2.5 8.2 5.5 9.5 9.5 9.5C13.5 9.5 16.5 8.2 16.5 6.5V9.5C16.5 11.2 13.5 12.5 9.5 12.5C5.5 12.5 2.5 11.2 2.5 9.5Z"/><path d="M2.5 11.5C2.5 13.2 5.5 14.5 9.5 14.5C13.5 14.5 16.5 13.2 16.5 11.5V14.5C16.5 16.2 13.5 17.5 9.5 17.5C5.5 17.5 2.5 16.2 2.5 14.5Z"/></g><path d="M1 0.5L17 17.5" stroke="#191919" stroke-width="2.8"/><path d="M1 0.5L17 17.5" stroke="#c4c4c4" stroke-width="1"/></svg>
<svg style="left:1548px;top:830px" width="19" height="18" viewBox="0 0 19 18"><g stroke="#c4c4c4" stroke-width="1.5" fill="none"><path d="M3 10A6.5 6.5 0 0 1 13 4"/><path d="M16 8A6.5 6.5 0 0 1 6 14.5"/></g><path d="M12 1.5L16 4L12 6.5Z" fill="#c4c4c4"/><path d="M7 17L3 14.5L7 12Z" fill="#c4c4c4"/><circle cx="9.5" cy="10" r="2.5" fill="#c4c4c4"/><path d="M2 0.5L18 17.5" stroke="#191919" stroke-width="2.8"/><path d="M2 0.5L18 17.5" stroke="#c4c4c4" stroke-width="1"/></svg>
<svg style="left:1581px;top:831px" width="18" height="17" viewBox="0 0 18 17"><circle cx="8.5" cy="8.5" r="7.8" fill="none" stroke="#c4c4c4" stroke-width="1.2"/><path d="M5 9L7.5 11.5L12 6.5" fill="none" stroke="#c4c4c4" stroke-width="1.5"/></svg>
</body></html>
